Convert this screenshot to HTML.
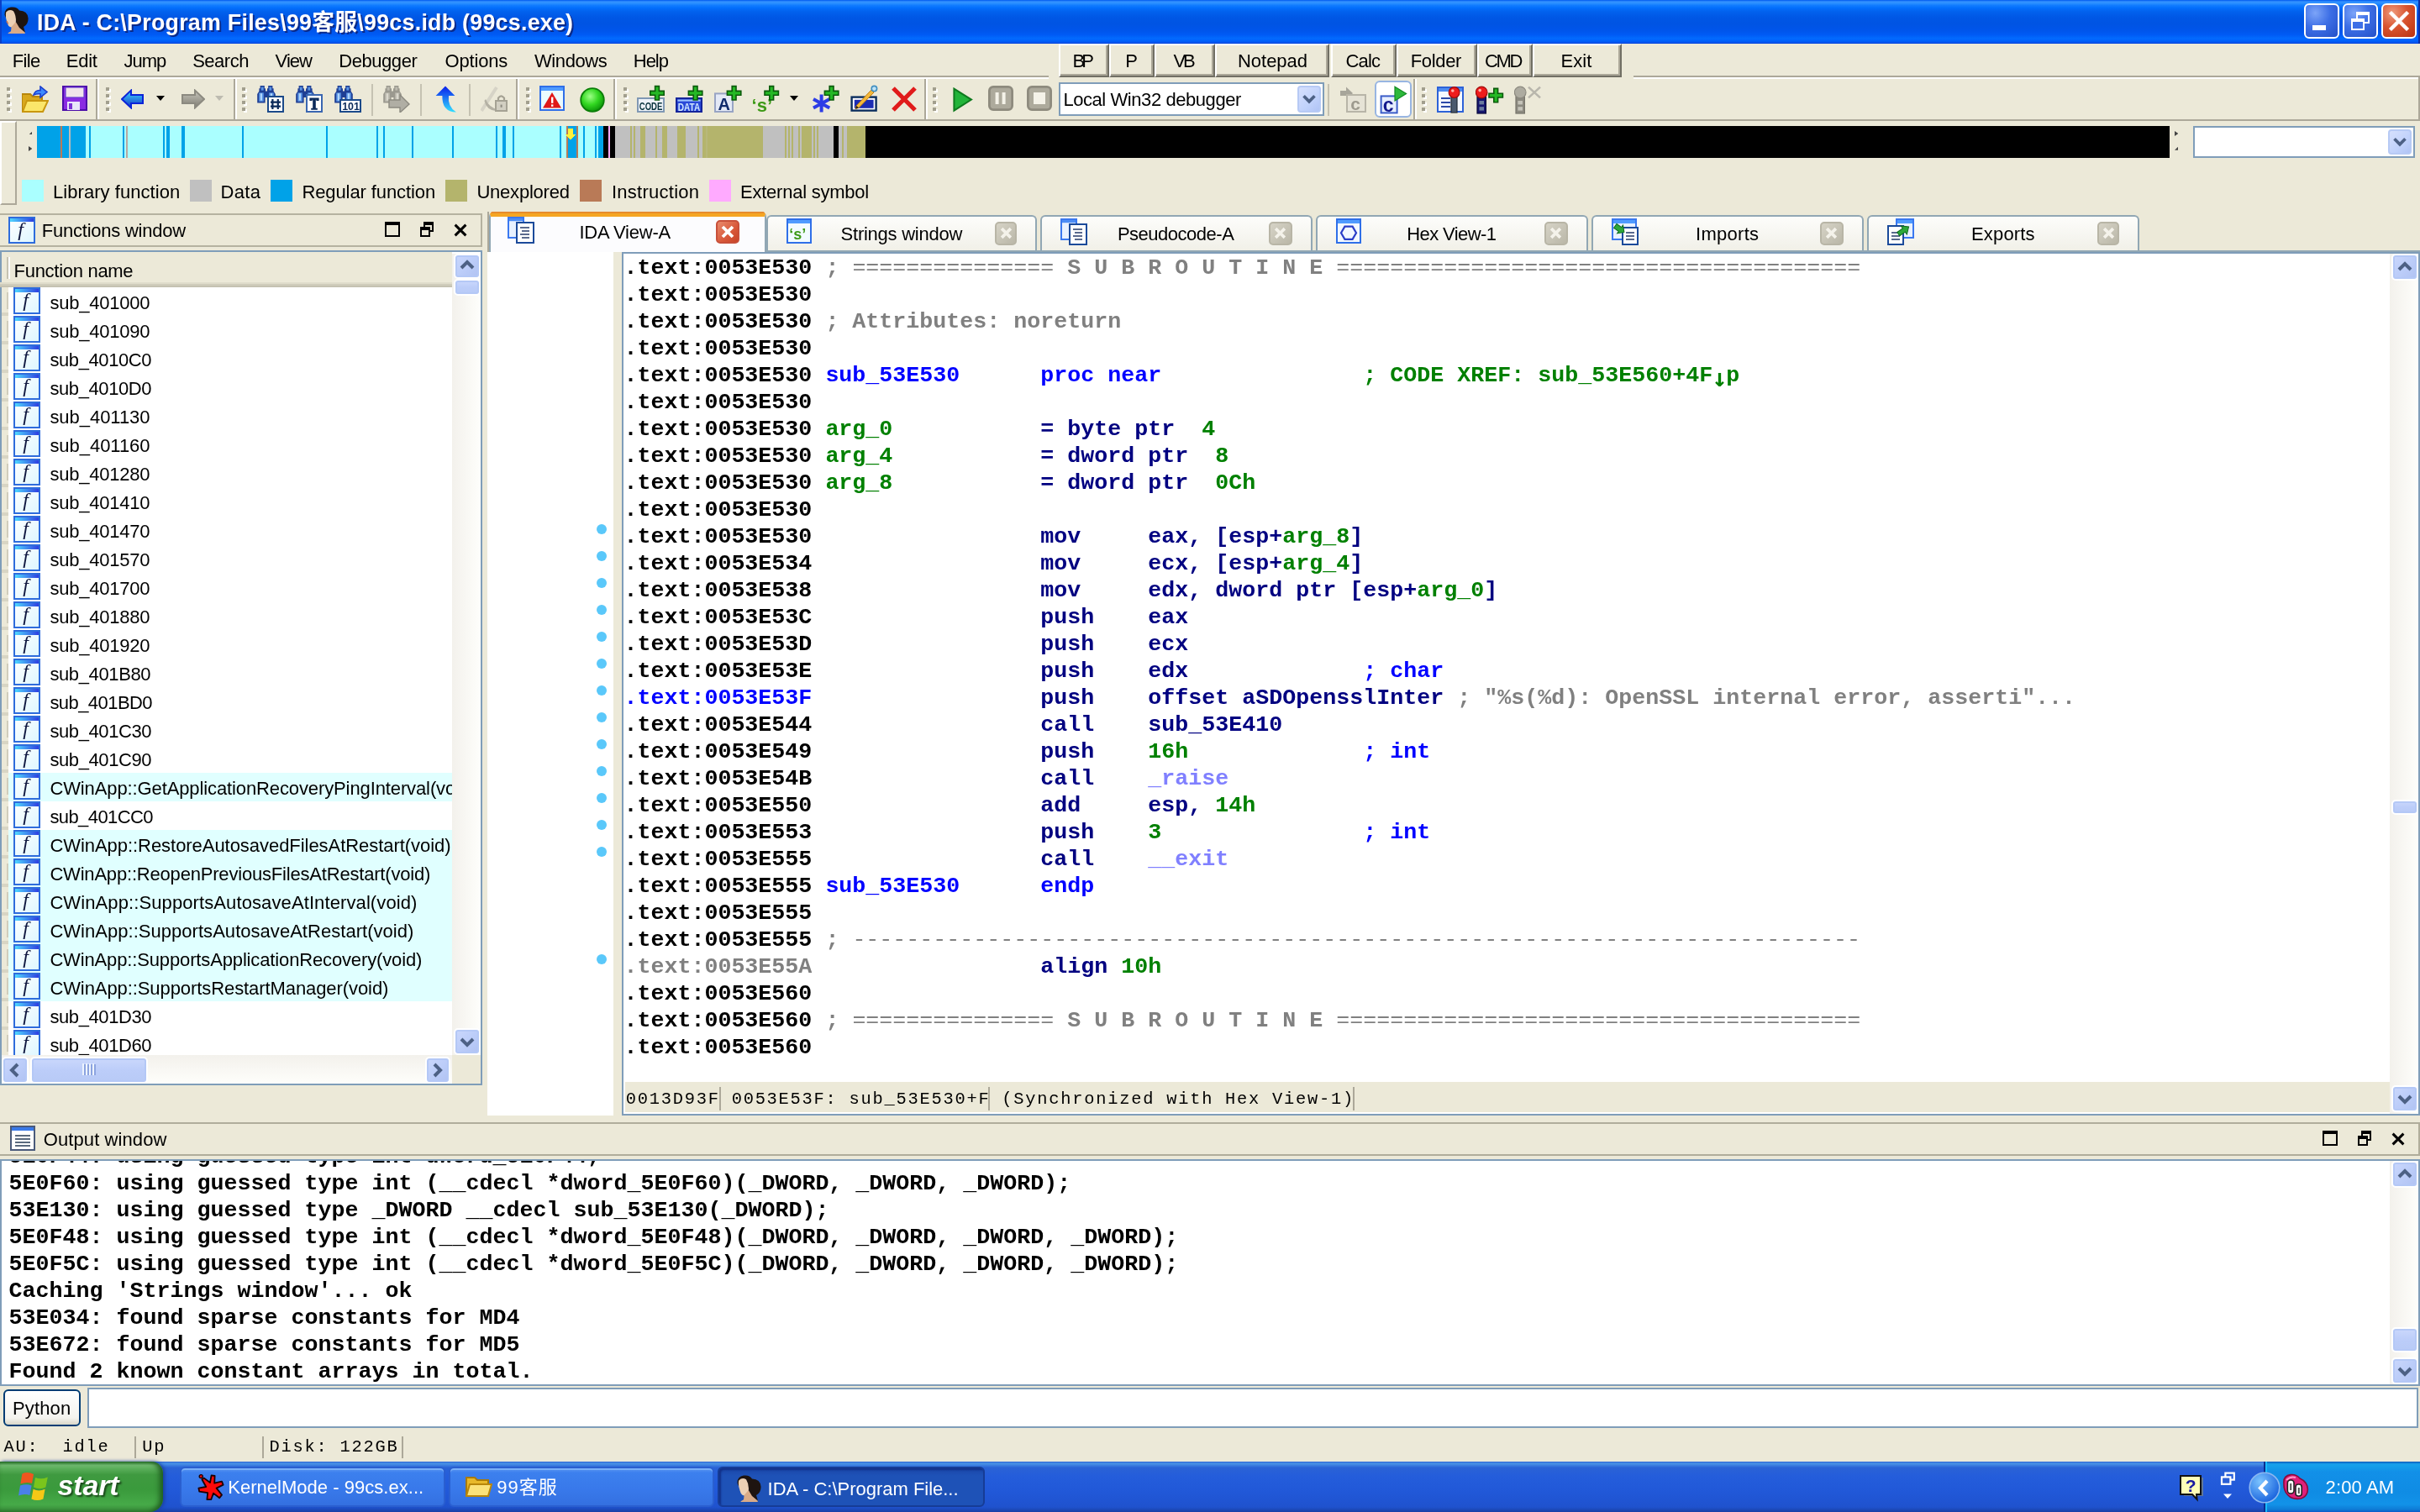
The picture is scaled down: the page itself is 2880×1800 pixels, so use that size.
<!DOCTYPE html><html><head><meta charset="utf-8"><title>IDA</title><style>
*{box-sizing:border-box;margin:0;padding:0}
html,body{width:2880px;height:1800px;overflow:hidden;background:#ECE9D8}
#r{position:absolute;left:0;top:0;width:1440px;height:900px;transform:scale(2);transform-origin:0 0;will-change:transform;background:#ECE9D8;overflow:hidden;font:11px "Liberation Sans","Noto Sans CJK SC",sans-serif;color:#000}
#r div,#r span,#r svg{position:absolute}
#r span.t{white-space:pre;line-height:13px}
.mono{font:bold 13.333px "Liberation Mono",monospace;white-space:pre;line-height:16px;height:16px}
.mono span{position:static !important}
.cm{font:10.2px "Liberation Mono",monospace;white-space:pre;line-height:13px;letter-spacing:0.88px}
</style></head><body><div id="r"><svg style="left:0;top:0" width="0" height="0"><defs><linearGradient id="fg" x1="0" y1="0" x2="1" y2="1"><stop offset="0" stop-color="#FFFFFF"/><stop offset="1" stop-color="#DDF6FF"/></linearGradient><linearGradient id="fb" x1="0" y1="0" x2="1" y2="0"><stop offset="0" stop-color="#4FD8FF"/><stop offset="1" stop-color="#2F3FE0"/></linearGradient></defs></svg>
<div style="left:0px;top:0px;width:1440px;height:26px;background:linear-gradient(180deg,#0058EE 0%,#3593FF 4%,#288EFF 8%,#127DFF 12%,#036FFC 18%,#0262EE 26%,#0057E5 40%,#0054E3 55%,#0055EB 70%,#005BF5 80%,#026AFE 88%,#0061FC 93%,#0057F0 97%,#003DD7 100%)"></div>
<svg style="left:2.2px;top:3.8px" width="16" height="16.5" viewBox="0 0 16 16.5"><path d="M0.8 5 Q0.5 1 4.5 0.3 Q8 -0.2 9.5 2.3 Q14.5 2.5 14.8 7 Q14.8 10.5 12 12 L13 15.5 L8 11.5 L6 3 L1.5 6.5 Z" fill="#1e1410"/><path d="M1.6 3.2 Q3.6 1.2 6 2.6 Q7.8 5.5 7.4 9.2 Q7 12 4.8 12.2 Q3 12.2 2.4 9.6 Q1 6 1.6 3.2Z" fill="#ecd0b4"/><path d="M2 8.5 Q2.5 10 3 9.8" stroke="#c8785a" stroke-width="0.8" fill="none"/><path d="M4.8 12 L7.4 9 L9.5 12.5 L12.8 15.2 L13 16.3 L2.8 16.3 L2.8 15.6 L4.5 14.6 Z" fill="#d9ab88"/></svg>
<span class="t" style="left:22px;top:4.7px;font:bold 13.4px 'Liberation Sans','Noto Sans CJK SC',sans-serif;line-height:17px;color:#fff;text-shadow:1px 1px 0 #0a2a8a;letter-spacing:0.135px">IDA - C:\Program Files\99客服\99cs.idb (99cs.exe)</span>
<div style="left:1371px;top:2px;width:21px;height:21px;border:1px solid #fff;border-radius:3px;background:radial-gradient(circle at 30% 25%,#7ca4f8 0%,#3d6fe6 45%,#2350c8 100%)"><div style="left:4px;top:12px;width:8px;height:3px;background:#fff"></div></div>
<div style="left:1394px;top:2px;width:21px;height:21px;border:1px solid #fff;border-radius:3px;background:radial-gradient(circle at 30% 25%,#7ca4f8 0%,#3d6fe6 45%,#2350c8 100%)"><div style="left:7px;top:4px;width:8px;height:7px;border:1px solid #fff;border-top-width:2px"></div><div style="left:4px;top:8px;width:8px;height:7px;border:1px solid #fff;border-top-width:2px;background:#3d6fe6"></div></div>
<div style="left:1417px;top:2px;width:21px;height:21px;border:1px solid #fff;border-radius:3px;background:radial-gradient(circle at 30% 25%,#ee9a7c 0%,#d9542f 45%,#b8320f 100%)"><svg style="left:0;top:0" width="19" height="19" viewBox="0 0 19 19"><path d="M5 5 L14 14 M14 5 L5 14" stroke="#fff" stroke-width="2.2" stroke-linecap="square"/></svg></div>
<div style="left:1439px;top:0px;width:1px;height:26px;background:#0A2FA8"></div>
<div style="left:0px;top:0px;width:1px;height:26px;background:#0A3FC8"></div>
<span class="t" style="left:7.4px;top:30.0px;letter-spacing:-0.345px;">File</span>
<span class="t" style="left:39.4px;top:30.0px;letter-spacing:-0.123px;">Edit</span>
<span class="t" style="left:73.7px;top:30.0px;letter-spacing:-0.469px;">Jump</span>
<span class="t" style="left:114.6px;top:30.0px;letter-spacing:-0.252px;">Search</span>
<span class="t" style="left:163.8px;top:30.0px;letter-spacing:-0.485px;">View</span>
<span class="t" style="left:201.6px;top:30.0px;letter-spacing:-0.218px;">Debugger</span>
<span class="t" style="left:264.8px;top:30.0px;letter-spacing:-0.087px;">Options</span>
<span class="t" style="left:318px;top:30.0px;letter-spacing:-0.204px;">Windows</span>
<span class="t" style="left:376.9px;top:30.0px;letter-spacing:-0.508px;">Help</span>
<div style="left:630px;top:26px;width:29.5px;height:19.5px;border-left:1px solid #fff;border-top:1px solid #fff;border-right:1px solid #716F64;border-bottom:1px solid #716F64;box-shadow:inset -1px -1px 0 #ACA899"></div>
<span class="t" style="left:638.3px;top:30.3px;letter-spacing:-1.988px;">BP</span>
<div style="left:660px;top:26px;width:26.5px;height:19.5px;border-left:1px solid #fff;border-top:1px solid #fff;border-right:1px solid #716F64;border-bottom:1px solid #716F64;box-shadow:inset -1px -1px 0 #ACA899"></div>
<span class="t" style="left:669.6px;top:30.3px;letter-spacing:-0.544px;">P</span>
<div style="left:687px;top:26px;width:35.5px;height:19.5px;border-left:1px solid #fff;border-top:1px solid #fff;border-right:1px solid #716F64;border-bottom:1px solid #716F64;box-shadow:inset -1px -1px 0 #ACA899"></div>
<span class="t" style="left:698.3px;top:30.3px;letter-spacing:-1.688px;">VB</span>
<div style="left:723px;top:26px;width:68px;height:19.5px;border-left:1px solid #fff;border-top:1px solid #fff;border-right:1px solid #716F64;border-bottom:1px solid #716F64;box-shadow:inset -1px -1px 0 #ACA899"></div>
<span class="t" style="left:736.5px;top:30.3px;letter-spacing:-0.016px;">Notepad</span>
<div style="left:792px;top:26px;width:38.5px;height:19.5px;border-left:1px solid #fff;border-top:1px solid #fff;border-right:1px solid #716F64;border-bottom:1px solid #716F64;box-shadow:inset -1px -1px 0 #ACA899"></div>
<span class="t" style="left:800.8px;top:30.3px;letter-spacing:-0.439px;">Calc</span>
<div style="left:831px;top:26px;width:47.5px;height:19.5px;border-left:1px solid #fff;border-top:1px solid #fff;border-right:1px solid #716F64;border-bottom:1px solid #716F64;box-shadow:inset -1px -1px 0 #ACA899"></div>
<span class="t" style="left:839.4px;top:30.3px;letter-spacing:-0.177px;">Folder</span>
<div style="left:879px;top:26px;width:32.5px;height:19.5px;border-left:1px solid #fff;border-top:1px solid #fff;border-right:1px solid #716F64;border-bottom:1px solid #716F64;box-shadow:inset -1px -1px 0 #ACA899"></div>
<span class="t" style="left:883.5px;top:30.3px;letter-spacing:-1.181px;">CMD</span>
<div style="left:912px;top:26px;width:53px;height:19.5px;border-left:1px solid #fff;border-top:1px solid #fff;border-right:1px solid #716F64;border-bottom:1px solid #716F64;box-shadow:inset -1px -1px 0 #ACA899"></div>
<span class="t" style="left:928.7px;top:30.3px;letter-spacing:0.052px;">Exit</span>
<div style="left:0px;top:45px;width:624px;height:1px;background:#ACA899"></div>
<div style="left:0px;top:46px;width:624px;height:1px;background:#fff"></div>
<div style="left:972px;top:45px;width:468px;height:1px;background:#ACA899"></div>
<div style="left:972px;top:46px;width:468px;height:1px;background:#fff"></div>
<div style="left:0px;top:71px;width:1440px;height:1px;background:#ACA899"></div>
<svg style="left:4px;top:52px" width="3" height="16" viewBox="0 0 3 16"><rect x="1" y="1" width="2" height="2" fill="#fff"/><rect x="0" y="0" width="2" height="2" fill="#A29F8E"/><rect x="1" y="5" width="2" height="2" fill="#fff"/><rect x="0" y="4" width="2" height="2" fill="#A29F8E"/><rect x="1" y="9" width="2" height="2" fill="#fff"/><rect x="0" y="8" width="2" height="2" fill="#A29F8E"/><rect x="1" y="13" width="2" height="2" fill="#fff"/><rect x="0" y="12" width="2" height="2" fill="#A29F8E"/></svg>
<svg style="left:13px;top:51px" width="16" height="16" viewBox="0 0 16 16"><path d="M0 5 H5 L6.5 6.5 H12 V15.5 H0 Z" fill="#D9A81C" stroke="#B8860B" stroke-width="1"/><path d="M3 9 H15.5 L12.5 15.5 H0.5 Z" fill="#FBE66A" stroke="#C9970F" stroke-width="1"/><path d="M7 5.5 Q8 2.5 11 2.8 V0.5 L15 3.8 L11 7 V4.9 Q9 4.7 7 5.5Z" fill="#3D8BFF" stroke="#1C3FCF" stroke-width="0.8"/></svg>
<svg style="left:37px;top:51px" width="15" height="15" viewBox="0 0 15 15"><rect x="0.5" y="0.5" width="14" height="14" fill="#8A2BE2" stroke="#4B0CA8"/><rect x="2" y="1" width="11" height="6" fill="#F1E4EA" stroke="#6A3FD0" stroke-width="0.6"/><rect x="3" y="9.5" width="7.5" height="5" fill="#E8E4FA"/><rect x="4" y="10.5" width="2" height="3.5" fill="#7B2FD6"/></svg>
<div style="left:57px;top:47px;width:1px;height:24px;background:#ACA899"></div>
<div style="left:58px;top:47px;width:1px;height:24px;background:#fff"></div>
<svg style="left:62.5px;top:52px" width="3" height="16" viewBox="0 0 3 16"><rect x="1" y="1" width="2" height="2" fill="#fff"/><rect x="0" y="0" width="2" height="2" fill="#A29F8E"/><rect x="1" y="5" width="2" height="2" fill="#fff"/><rect x="0" y="4" width="2" height="2" fill="#A29F8E"/><rect x="1" y="9" width="2" height="2" fill="#fff"/><rect x="0" y="8" width="2" height="2" fill="#A29F8E"/><rect x="1" y="13" width="2" height="2" fill="#fff"/><rect x="0" y="12" width="2" height="2" fill="#A29F8E"/></svg>
<svg style="left:72px;top:52.5px" width="14" height="12" viewBox="0 0 14 12"><defs><linearGradient id="ga" x1="0" y1="0" x2="0" y2="1"><stop offset="0" stop-color="#3FD8FF"/><stop offset="1" stop-color="#1233C8"/></linearGradient></defs><path d="M0.5 6 L6 0.8 V3.5 H13 V8.5 H6 V11.2 Z" fill="url(#ga)" stroke="#0A22D8" stroke-width="1"/></svg>
<svg style="left:93px;top:57px" width="5" height="3" viewBox="0 0 5 3"><path d="M0 0 H5 L2.5 3 Z" fill="#000"/></svg>
<svg style="left:108px;top:52.5px" width="14" height="12" viewBox="0 0 14 12"><defs><linearGradient id="gb" x1="0" y1="0" x2="0" y2="1"><stop offset="0" stop-color="#C8C6BC"/><stop offset="1" stop-color="#7E7C72"/></linearGradient></defs><path d="M13.5 6 L8 0.8 V3.5 H0.5 V8.5 H8 V11.2 Z" fill="url(#gb)" stroke="#8C8A80" stroke-width="1"/></svg>
<svg style="left:128px;top:57px" width="5" height="3" viewBox="0 0 5 3"><path d="M0 0 H5 L2.5 3 Z" fill="#BDBBB0"/></svg>
<div style="left:139px;top:47px;width:1px;height:24px;background:#ACA899"></div>
<div style="left:140px;top:47px;width:1px;height:24px;background:#fff"></div>
<svg style="left:144.3px;top:52px" width="3" height="16" viewBox="0 0 3 16"><rect x="1" y="1" width="2" height="2" fill="#fff"/><rect x="0" y="0" width="2" height="2" fill="#A29F8E"/><rect x="1" y="5" width="2" height="2" fill="#fff"/><rect x="0" y="4" width="2" height="2" fill="#A29F8E"/><rect x="1" y="9" width="2" height="2" fill="#fff"/><rect x="0" y="8" width="2" height="2" fill="#A29F8E"/><rect x="1" y="13" width="2" height="2" fill="#fff"/><rect x="0" y="12" width="2" height="2" fill="#A29F8E"/></svg>
<svg style="left:153px;top:51px" width="16" height="16" viewBox="0 0 16 16"><path d="M1.8 0 H4.4 V1.6 H5 V3.2 H6 V1.6 H6.6 V0 H9.2 V1.6 H9.8 V3.2 L10.9 5 V10.2 H6.2 V7 H4.8 V10.2 H0.1 V5 L1.2 3.2 V1.6 H1.8 Z" fill="#1F3F94"/><rect x="1.1" y="4.2" width="2.8" height="5.2" fill="#5B95E6"/><rect x="1.9" y="4.6" width="1.1" height="4.2" fill="#B0D6FA"/><rect x="7.1" y="4.2" width="2.8" height="5.2" fill="#5B95E6"/><rect x="7.9" y="4.6" width="1.1" height="4.2" fill="#B0D6FA"/><rect x="2.4" y="0.8" width="1.4" height="2" fill="#5B95E6"/><rect x="7.2" y="0.8" width="1.4" height="2" fill="#5B95E6"/><rect x="6.5" y="6.5" width="9" height="9" fill="#fff" stroke="#1B4A8A"/><path d="M9.2 8 V14 M12.4 8 V14 M8 9.8 H14 M8 12.3 H14" stroke="#0B2A5A" stroke-width="1.1"/></svg>
<svg style="left:176px;top:51px" width="16" height="16" viewBox="0 0 16 16"><path d="M1.8 0 H4.4 V1.6 H5 V3.2 H6 V1.6 H6.6 V0 H9.2 V1.6 H9.8 V3.2 L10.9 5 V10.2 H6.2 V7 H4.8 V10.2 H0.1 V5 L1.2 3.2 V1.6 H1.8 Z" fill="#1F3F94"/><rect x="1.1" y="4.2" width="2.8" height="5.2" fill="#5B95E6"/><rect x="1.9" y="4.6" width="1.1" height="4.2" fill="#B0D6FA"/><rect x="7.1" y="4.2" width="2.8" height="5.2" fill="#5B95E6"/><rect x="7.9" y="4.6" width="1.1" height="4.2" fill="#B0D6FA"/><rect x="2.4" y="0.8" width="1.4" height="2" fill="#5B95E6"/><rect x="7.2" y="0.8" width="1.4" height="2" fill="#5B95E6"/><rect x="6.5" y="5.5" width="9" height="10" fill="#fff" stroke="#3A66B0"/><path d="M8.2 7.2 H13.8 V9 H12.2 V8.4 H11.9 V13.4 H12.9 V14.4 H9.1 V13.4 H10.1 V8.4 H9.8 V9 H8.2 Z" fill="#0B2A5A"/></svg>
<svg style="left:199px;top:51px" width="16" height="16" viewBox="0 0 16 16"><path d="M1.8 0 H4.4 V1.6 H5 V3.2 H6 V1.6 H6.6 V0 H9.2 V1.6 H9.8 V3.2 L10.9 5 V10.2 H6.2 V7 H4.8 V10.2 H0.1 V5 L1.2 3.2 V1.6 H1.8 Z" fill="#1F3F94"/><rect x="1.1" y="4.2" width="2.8" height="5.2" fill="#5B95E6"/><rect x="1.9" y="4.6" width="1.1" height="4.2" fill="#B0D6FA"/><rect x="7.1" y="4.2" width="2.8" height="5.2" fill="#5B95E6"/><rect x="7.9" y="4.6" width="1.1" height="4.2" fill="#B0D6FA"/><rect x="2.4" y="0.8" width="1.4" height="2" fill="#5B95E6"/><rect x="7.2" y="0.8" width="1.4" height="2" fill="#5B95E6"/><rect x="3.5" y="8.5" width="12" height="7" fill="#fff" stroke="#1B4A8A"/><text x="4.6" y="14.3" font-family="Liberation Sans,sans-serif" font-weight="bold" font-size="6.2" fill="#0B2A5A">101</text></svg>
<div style="left:221px;top:50px;width:1px;height:19px;background:#C5C2B2"></div>
<svg style="left:228px;top:51px" width="16" height="16" viewBox="0 0 16 16"><path d="M1.8 0 H4.4 V1.6 H5 V3.2 H6 V1.6 H6.6 V0 H9.2 V1.6 H9.8 V3.2 L10.9 5 V10.2 H6.2 V7 H4.8 V10.2 H0.1 V5 L1.2 3.2 V1.6 H1.8 Z" fill="#9B998F"/><rect x="1.1" y="4.2" width="2.8" height="5.2" fill="#BDBBB0"/><rect x="1.9" y="4.6" width="1.1" height="4.2" fill="#DAD8CE"/><rect x="7.1" y="4.2" width="2.8" height="5.2" fill="#BDBBB0"/><rect x="7.9" y="4.6" width="1.1" height="4.2" fill="#DAD8CE"/><rect x="2.4" y="0.8" width="1.4" height="2" fill="#BDBBB0"/><rect x="7.2" y="0.8" width="1.4" height="2" fill="#BDBBB0"/><path d="M3.5 8.5 H10 V5.5 L15.5 11 L10 16 V13 H3.5 Z" fill="#B0AEA4" stroke="#8C8A80" stroke-width="0.7"/></svg>
<div style="left:250px;top:50px;width:1px;height:19px;background:#C5C2B2"></div>
<svg style="left:258.5px;top:51px" width="13" height="16" viewBox="0 0 13 16"><defs><linearGradient id="gu" x1="0" y1="0" x2="0" y2="1"><stop offset="0" stop-color="#0A1EEB"/><stop offset="1" stop-color="#33E0FF"/></linearGradient></defs><path d="M6 0.3 L11.7 6 H8 Q7.2 12.5 12.5 15.8 Q3.8 15.5 4.2 6 H0.3 Z" fill="url(#gu)"/></svg>
<div style="left:279px;top:50px;width:1px;height:19px;background:#C5C2B2"></div>
<svg style="left:286px;top:51px" width="16" height="16" viewBox="0 0 16 16"><path d="M0.5 15 L9.5 1" stroke="#D6D3C6" stroke-width="2"/><path d="M3 8 Q5 13 10 14 L9 15 Q3.5 14.5 2.2 9 Z" fill="#B4B1A4"/><rect x="9" y="9" width="6.5" height="6" fill="#D2CFC2" stroke="#A5A294"/><path d="M10.5 9 V7.3 Q12.2 5 14 7.3 V9" fill="none" stroke="#A5A294" stroke-width="1.1"/><rect x="11.8" y="11.3" width="1" height="1.6" fill="#8C8A80"/></svg>
<div style="left:307px;top:47px;width:1px;height:24px;background:#ACA899"></div>
<div style="left:308px;top:47px;width:1px;height:24px;background:#fff"></div>
<svg style="left:312.5px;top:52px" width="3" height="16" viewBox="0 0 3 16"><rect x="1" y="1" width="2" height="2" fill="#fff"/><rect x="0" y="0" width="2" height="2" fill="#A29F8E"/><rect x="1" y="5" width="2" height="2" fill="#fff"/><rect x="0" y="4" width="2" height="2" fill="#A29F8E"/><rect x="1" y="9" width="2" height="2" fill="#fff"/><rect x="0" y="8" width="2" height="2" fill="#A29F8E"/><rect x="1" y="13" width="2" height="2" fill="#fff"/><rect x="0" y="12" width="2" height="2" fill="#A29F8E"/></svg>
<svg style="left:321px;top:51px" width="15" height="15" viewBox="0 0 15 15"><rect x="0.5" y="0.5" width="14" height="14" fill="#EAFBFF" stroke="#2F6FE8"/><rect x="1" y="1" width="13" height="2" fill="#4F9BFF"/><path d="M7.5 4 L13 13.3 H2 Z" fill="#E01818"/><rect x="7" y="6.8" width="1.2" height="3.6" fill="#fff"/><rect x="7" y="11.2" width="1.2" height="1.2" fill="#fff"/></svg>
<svg style="left:344.5px;top:51.5px" width="15" height="15" viewBox="0 0 15 15"><defs><radialGradient id="gg" cx="0.4" cy="0.35" r="0.65"><stop offset="0" stop-color="#9CFF86"/><stop offset="0.55" stop-color="#33D822"/><stop offset="1" stop-color="#0E9A0A"/></radialGradient></defs><circle cx="7.5" cy="7.5" r="6.9" fill="url(#gg)" stroke="#0B7E08" stroke-width="0.9"/></svg>
<div style="left:365px;top:47px;width:1px;height:24px;background:#ACA899"></div>
<div style="left:366px;top:47px;width:1px;height:24px;background:#fff"></div>
<svg style="left:370.5px;top:52px" width="3" height="16" viewBox="0 0 3 16"><rect x="1" y="1" width="2" height="2" fill="#fff"/><rect x="0" y="0" width="2" height="2" fill="#A29F8E"/><rect x="1" y="5" width="2" height="2" fill="#fff"/><rect x="0" y="4" width="2" height="2" fill="#A29F8E"/><rect x="1" y="9" width="2" height="2" fill="#fff"/><rect x="0" y="8" width="2" height="2" fill="#A29F8E"/><rect x="1" y="13" width="2" height="2" fill="#fff"/><rect x="0" y="12" width="2" height="2" fill="#A29F8E"/></svg>
<svg style="left:378.5px;top:50px" width="17" height="17" viewBox="0 0 17 17"><rect x="0.5" y="8.5" width="15.5" height="8" fill="#EEF3F8" stroke="#8098B4"/><text x="1.4" y="15.6" font-family="Liberation Sans,sans-serif" font-weight="bold" font-size="6.6" fill="#08323C" textLength="13.8" lengthAdjust="spacingAndGlyphs">CODE</text><path d="M7.9 4.2 h2.9 v-2.9 h2.4 v2.9 h2.9 v2.4 h-2.9 v2.9 h-2.4 v-2.9 h-2.9 Z" fill="#25B825" stroke="#0A5A0A" stroke-width="0.8"/></svg>
<svg style="left:401.5px;top:50px" width="17" height="17" viewBox="0 0 17 17"><rect x="0.5" y="8.5" width="15" height="8" fill="#2A49D8" stroke="#14249A"/><rect x="1.2" y="9.3" width="13.6" height="1" fill="#9FC4FF"/><text x="1.4" y="15.8" font-family="Liberation Sans,sans-serif" font-weight="bold" font-size="6.6" fill="#CFE6FF" textLength="13.2" lengthAdjust="spacingAndGlyphs">DATA</text><path d="M7.7 4.2 h2.9 v-2.9 h2.4 v2.9 h2.9 v2.4 h-2.9 v2.9 h-2.4 v-2.9 h-2.9 Z" fill="#25B825" stroke="#0A5A0A" stroke-width="0.8"/></svg>
<svg style="left:424.5px;top:50px" width="17" height="17" viewBox="0 0 17 17"><rect x="0.5" y="5.7" width="10.5" height="10.8" fill="#E4E9F6" stroke="#98A4C4"/><text x="2.2" y="15.4" font-family="Liberation Sans,sans-serif" font-weight="bold" font-size="10" fill="#102A6A">A</text><path d="M7.7 4.2 h2.9 v-2.9 h2.4 v2.9 h2.9 v2.4 h-2.9 v2.9 h-2.4 v-2.9 h-2.9 Z" fill="#25B825" stroke="#0A5A0A" stroke-width="0.8"/></svg>
<svg style="left:447px;top:50px" width="18" height="17" viewBox="0 0 18 17"><text x="0.3" y="16.4" font-family="Liberation Sans,sans-serif" font-weight="bold" font-size="11" fill="#3E9A18">‘s’</text><path d="M8 4.2 h2.9 v-2.9 h2.4 v2.9 h2.9 v2.4 h-2.9 v2.9 h-2.4 v-2.9 h-2.9 Z" fill="#25B825" stroke="#0A5A0A" stroke-width="0.8"/></svg>
<svg style="left:469.8px;top:57px" width="5" height="3" viewBox="0 0 5 3"><path d="M0 0 H5 L2.5 3 Z" fill="#000"/></svg>
<svg style="left:482.5px;top:50px" width="17" height="17" viewBox="0 0 17 17"><path d="M5.8 6.3 V16.8 M1 9 L10.6 14.2 M10.6 9 L1 14.2" stroke="#2C3CE6" stroke-width="2"/><path d="M7.7 4.2 h2.9 v-2.9 h2.4 v2.9 h2.9 v2.4 h-2.9 v2.9 h-2.4 v-2.9 h-2.9 Z" fill="#25B825" stroke="#0A5A0A" stroke-width="0.8"/></svg>
<svg style="left:505.5px;top:50px" width="17" height="17" viewBox="0 0 17 17"><rect x="0.8" y="7.8" width="14.5" height="8" fill="#fff" stroke="#0B2E5E" stroke-width="1.2"/><rect x="2.4" y="9.4" width="11.4" height="5" fill="#1C2CB4"/><path d="M3.5 13 L12.5 3.5 L14 5 L5 14.2 L3 14.8 Z" fill="#F4B93A" stroke="#C07C12" stroke-width="0.5"/><circle cx="14.2" cy="2.8" r="1.6" fill="#BFE3F6" stroke="#3F8EC0" stroke-width="0.8"/><path d="M3 14.8 L3.6 12.9 L5 14.2Z" fill="#222"/></svg>
<svg style="left:529.5px;top:50.5px" width="16" height="16" viewBox="0 0 16 16"><path d="M1.5 1.5 L14.5 14.5 M14.5 1.5 L1.5 14.5" stroke="#E01B1B" stroke-width="2.6"/></svg>
<div style="left:550px;top:47px;width:1px;height:24px;background:#ACA899"></div>
<div style="left:551px;top:47px;width:1px;height:24px;background:#fff"></div>
<svg style="left:555.3px;top:52px" width="3" height="16" viewBox="0 0 3 16"><rect x="1" y="1" width="2" height="2" fill="#fff"/><rect x="0" y="0" width="2" height="2" fill="#A29F8E"/><rect x="1" y="5" width="2" height="2" fill="#fff"/><rect x="0" y="4" width="2" height="2" fill="#A29F8E"/><rect x="1" y="9" width="2" height="2" fill="#fff"/><rect x="0" y="8" width="2" height="2" fill="#A29F8E"/><rect x="1" y="13" width="2" height="2" fill="#fff"/><rect x="0" y="12" width="2" height="2" fill="#A29F8E"/></svg>
<svg style="left:566.5px;top:51.5px" width="12" height="15" viewBox="0 0 12 15"><path d="M0.7 0.8 L11 7.3 L0.7 13.8 Z" fill="#22B43A" stroke="#0E7A1E" stroke-width="1"/></svg>
<svg style="left:587.5px;top:51px" width="15" height="15" viewBox="0 0 15 15"><rect x="0.7" y="0.7" width="13.6" height="13.6" rx="2.3" fill="#ADAA9C" stroke="#8E8B7E" stroke-width="1.4"/><rect x="4.3" y="4" width="2" height="7" fill="#F4F2E8"/><rect x="8.3" y="4" width="2" height="7" fill="#F4F2E8"/></svg>
<svg style="left:610.5px;top:51px" width="15" height="15" viewBox="0 0 15 15"><rect x="0.7" y="0.7" width="13.6" height="13.6" rx="2.3" fill="#ADAA9C" stroke="#8E8B7E" stroke-width="1.4"/><rect x="4" y="4" width="7" height="7" fill="#F4F2E8"/></svg>
<div style="left:630px;top:49px;width:158px;height:20px;background:#fff;border:1px solid #7F9DB9"></div>
<span class="t" style="left:632.7px;top:52.7px;letter-spacing:-0.215px;">Local Win32 debugger</span>
<div style="left:772px;top:51px;width:14px;height:16px;border-radius:2px;border:1px solid #B7CAF5;background:linear-gradient(135deg,#D6E0FD 0%,#C1D2FB 60%,#B0C4F5 100%)"><svg style="left:0;top:0" width="12" height="14" viewBox="0 0 13 14"><path d="M3 5 L6.5 8.5 L10 5" fill="none" stroke="#4D6185" stroke-width="2"/></svg></div>
<div style="left:790px;top:50px;width:1px;height:19px;background:#C5C2B2"></div>
<svg style="left:796.5px;top:51px" width="17" height="16" viewBox="0 0 17 16"><path d="M0.5 3 H4 V0.8 L8 4.5 L4 8.2 V6 H0.5 Z" fill="#A7A59A"/><rect x="4.5" y="5.5" width="11" height="10" fill="#E6E3D6" stroke="#B8B5A8"/><text x="6.6" y="14.5" font-family="Liberation Sans,sans-serif" font-weight="bold" font-size="10.5" fill="#9D9A8E">c</text></svg>
<div style="left:817.5px;top:48px;width:22.5px;height:22px;border:1px solid #98B5E2;border-radius:3px;background:#fff"></div>
<svg style="left:820.5px;top:50.5px" width="17" height="17" viewBox="0 0 17 17"><rect x="0.8" y="6.2" width="9.5" height="10" fill="#E6EEFF" stroke="#3A5CC8"/><text x="1.9" y="15.3" font-family="Liberation Sans,sans-serif" font-weight="bold" font-size="11.5" fill="#141A8C">c</text><path d="M9 0.6 L15.8 4.8 L9 9 Z" fill="#2DB83A" stroke="#128A22" stroke-width="0.6"/></svg>
<div style="left:841px;top:47px;width:1px;height:24px;background:#ACA899"></div>
<div style="left:842px;top:47px;width:1px;height:24px;background:#fff"></div>
<svg style="left:846.2px;top:52px" width="3" height="16" viewBox="0 0 3 16"><rect x="1" y="1" width="2" height="2" fill="#fff"/><rect x="0" y="0" width="2" height="2" fill="#A29F8E"/><rect x="1" y="5" width="2" height="2" fill="#fff"/><rect x="0" y="4" width="2" height="2" fill="#A29F8E"/><rect x="1" y="9" width="2" height="2" fill="#fff"/><rect x="0" y="8" width="2" height="2" fill="#A29F8E"/><rect x="1" y="13" width="2" height="2" fill="#fff"/><rect x="0" y="12" width="2" height="2" fill="#A29F8E"/></svg>
<svg style="left:855px;top:50.5px" width="17" height="17" viewBox="0 0 17 17"><rect x="0.5" y="1" width="15" height="14.5" fill="#F5F9FF" stroke="#2D62D8"/><rect x="1" y="1.5" width="14" height="2" fill="#4F8CF0"/><path d="M2.5 7.5 H8 M2.5 10 H8 M2.5 12.5 H8" stroke="#2D4AA8" stroke-width="1"/><rect x="8.5" y="6.5" width="3.5" height="9.5" fill="#4A5A6E" stroke="#222A36" stroke-width="0.6"/><circle cx="10.3" cy="4" r="3.2" fill="#EE1C1C" stroke="#A00A0A" stroke-width="0.6"/><circle cx="9.4" cy="3" r="0.9" fill="#FFB0A8"/></svg>
<svg style="left:877.5px;top:50.5px" width="17" height="17" viewBox="0 0 17 17"><rect x="1" y="6.5" width="5.2" height="10" fill="#16166E" stroke="#0A0A3C" stroke-width="0.6"/><rect x="2.2" y="9" width="2.8" height="2.2" fill="#6A7A9E"/><rect x="2.2" y="12.6" width="2.8" height="2.2" fill="#6A7A9E"/><circle cx="3.6" cy="4" r="3.4" fill="#EE1C1C" stroke="#A00A0A" stroke-width="0.6"/><circle cx="2.6" cy="2.8" r="0.9" fill="#FFB0A8"/><path d="M8 4.6 h2.9 v-2.9 h2.4 v2.9 h2.9 v2.4 h-2.9 v2.9 h-2.4 v-2.9 h-2.9 Z" fill="#25B825" stroke="#0A5A0A" stroke-width="0.8"/></svg>
<svg style="left:900.5px;top:50.5px" width="17" height="17" viewBox="0 0 17 17"><rect x="1" y="6.5" width="5.2" height="10" fill="#8C8A80" stroke="#77756B" stroke-width="0.6"/><rect x="2.2" y="9" width="2.8" height="2.2" fill="#C4C2B8"/><rect x="2.2" y="12.6" width="2.8" height="2.2" fill="#C4C2B8"/><circle cx="3.6" cy="4" r="3.4" fill="#ADABA0" stroke="#8C8A80" stroke-width="0.6"/><path d="M8.5 0.8 L15.5 7.2 M15.5 0.8 L8.5 7.2" stroke="#B8B6AC" stroke-width="1.3"/></svg>
<div style="left:0px;top:72px;width:10px;height:50px;background:#ECE9D8;border-left:1px solid #fff;border-top:1px solid #fff;border-right:1px solid #ACA899;border-bottom:1px solid #ACA899"></div>
<svg style="left:16.8px;top:77.5px" width="2.4" height="2.4" viewBox="0 0 2.4 2.4"><path d="M2.4 0 V2.4 H0 Z" fill="#444"/></svg>
<svg style="left:17px;top:87px" width="2.2" height="3" viewBox="0 0 2.2 3"><path d="M0 0 L2.2 1.5 L0 3 Z" fill="#444"/></svg>
<svg style="left:1294px;top:78px" width="2.2" height="3" viewBox="0 0 2.2 3"><path d="M0 0 L2.2 1.5 L0 3 Z" fill="#444"/></svg>
<svg style="left:1294px;top:87.3px" width="2.4" height="2.4" viewBox="0 0 2.4 2.4"><path d="M2.4 0 V2.4 H0 Z" fill="#444"/></svg>
<svg style="left:22px;top:75px" width="1269" height="19" viewBox="0 0 1269 19" shape-rendering="crispEdges"><rect x="0" y="0" width="14" height="19" fill="#00A2E8"/><rect x="14" y="0" width="1" height="19" fill="#B97A57"/><rect x="15" y="0" width="4" height="19" fill="#00A2E8"/><rect x="19" y="0" width="1" height="19" fill="#C0BAB4"/><rect x="20" y="0" width="9" height="19" fill="#00A2E8"/><rect x="29" y="0" width="2" height="19" fill="#AAFFFF"/><rect x="31" y="0" width="1" height="19" fill="#00A2E8"/><rect x="32" y="0" width="19" height="19" fill="#AAFFFF"/><rect x="51" y="0" width="1" height="19" fill="#00A2E8"/><rect x="52" y="0" width="1" height="19" fill="#AAFFFF"/><rect x="53" y="0" width="1" height="19" fill="#B8A8A0"/><rect x="54" y="0" width="21" height="19" fill="#AAFFFF"/><rect x="75" y="0" width="1" height="19" fill="#00A2E8"/><rect x="76" y="0" width="1" height="19" fill="#AAFFFF"/><rect x="77" y="0" width="2" height="19" fill="#00A2E8"/><rect x="79" y="0" width="7" height="19" fill="#AAFFFF"/><rect x="86" y="0" width="2" height="19" fill="#00A2E8"/><rect x="88" y="0" width="34" height="19" fill="#AAFFFF"/><rect x="122" y="0" width="1" height="19" fill="#00A2E8"/><rect x="123" y="0" width="49" height="19" fill="#AAFFFF"/><rect x="172" y="0" width="1" height="19" fill="#00A2E8"/><rect x="173" y="0" width="29" height="19" fill="#AAFFFF"/><rect x="202" y="0" width="1" height="19" fill="#00A2E8"/><rect x="203" y="0" width="3" height="19" fill="#AAFFFF"/><rect x="206" y="0" width="1" height="19" fill="#00A2E8"/><rect x="207" y="0" width="16" height="19" fill="#AAFFFF"/><rect x="223" y="0" width="1" height="19" fill="#00A2E8"/><rect x="224" y="0" width="23" height="19" fill="#AAFFFF"/><rect x="247" y="0" width="1" height="19" fill="#00A2E8"/><rect x="248" y="0" width="25" height="19" fill="#AAFFFF"/><rect x="273" y="0" width="1" height="19" fill="#00A2E8"/><rect x="274" y="0" width="3" height="19" fill="#AAFFFF"/><rect x="277" y="0" width="2" height="19" fill="#00A2E8"/><rect x="279" y="0" width="4" height="19" fill="#AAFFFF"/><rect x="283" y="0" width="1" height="19" fill="#00A2E8"/><rect x="284" y="0" width="27" height="19" fill="#AAFFFF"/><rect x="311" y="0" width="1" height="19" fill="#00A2E8"/><rect x="312" y="0" width="3" height="19" fill="#AAFFFF"/><rect x="315" y="0" width="1" height="19" fill="#B97A57"/><rect x="316" y="0" width="5" height="19" fill="#00A2E8"/><rect x="321" y="0" width="1" height="19" fill="#B97A57"/><rect x="322" y="0" width="3" height="19" fill="#AAFFFF"/><rect x="325" y="0" width="1" height="19" fill="#00A2E8"/><rect x="326" y="0" width="6" height="19" fill="#AAFFFF"/><rect x="332" y="0" width="1" height="19" fill="#00A2E8"/><rect x="333" y="0" width="1" height="19" fill="#AAFFFF"/><rect x="334" y="0" width="3" height="19" fill="#00A2E8"/><rect x="337" y="0" width="3" height="19" fill="#000"/><rect x="340" y="0" width="1" height="19" fill="#FFAAFF"/><rect x="341" y="0" width="3" height="19" fill="#000"/><rect x="344" y="0" width="9" height="19" fill="#C0C0C0"/><rect x="353" y="0" width="1" height="19" fill="#B4B46C"/><rect x="354" y="0" width="1" height="19" fill="#C0C0C0"/><rect x="355" y="0" width="1" height="19" fill="#B4B46C"/><rect x="356" y="0" width="3" height="19" fill="#C0C0C0"/><rect x="359" y="0" width="3" height="19" fill="#B4B46C"/><rect x="362" y="0" width="6" height="19" fill="#C0C0C0"/><rect x="368" y="0" width="1" height="19" fill="#B4B46C"/><rect x="369" y="0" width="3" height="19" fill="#C0C0C0"/><rect x="372" y="0" width="3" height="19" fill="#B4B46C"/><rect x="375" y="0" width="6" height="19" fill="#C0C0C0"/><rect x="381" y="0" width="5" height="19" fill="#B4B46C"/><rect x="386" y="0" width="7" height="19" fill="#C0C0C0"/><rect x="393" y="0" width="1" height="19" fill="#B4B46C"/><rect x="394" y="0" width="2" height="19" fill="#C0C0C0"/><rect x="396" y="0" width="2" height="19" fill="#B4B46C"/><rect x="398" y="0" width="1" height="19" fill="#B8B87A"/><rect x="399" y="0" width="33" height="19" fill="#B4B46C"/><rect x="432" y="0" width="13" height="19" fill="#C0C0C0"/><rect x="445" y="0" width="1" height="19" fill="#B4B46C"/><rect x="446" y="0" width="1" height="19" fill="#C0C0C0"/><rect x="447" y="0" width="1" height="19" fill="#B4B46C"/><rect x="448" y="0" width="1" height="19" fill="#C0C0C0"/><rect x="449" y="0" width="1" height="19" fill="#B4B46C"/><rect x="450" y="0" width="3" height="19" fill="#C0C0C0"/><rect x="453" y="0" width="1" height="19" fill="#B4B46C"/><rect x="454" y="0" width="1" height="19" fill="#C0C0C0"/><rect x="455" y="0" width="6" height="19" fill="#B4B46C"/><rect x="461" y="0" width="1" height="19" fill="#C0C0C0"/><rect x="462" y="0" width="1" height="19" fill="#B4B46C"/><rect x="463" y="0" width="1" height="19" fill="#C0C0C0"/><rect x="464" y="0" width="1" height="19" fill="#B4B46C"/><rect x="465" y="0" width="9" height="19" fill="#C0C0C0"/><rect x="474" y="0" width="3" height="19" fill="#000"/><rect x="477" y="0" width="2" height="19" fill="#C0C0C0"/><rect x="479" y="0" width="1" height="19" fill="#B4B46C"/><rect x="480" y="0" width="2" height="19" fill="#C0C0C0"/><rect x="482" y="0" width="11" height="19" fill="#B4B46C"/><rect x="493" y="0" width="776" height="19" fill="#000"/><path d="M316 1.5 h3 v3.5 h1.5 l-3 3.2 l-3 -3.2 h1.5 Z" fill="#FFF23A"/></svg>
<div style="left:1305px;top:75px;width:132px;height:19px;background:#fff;border:1px solid #7F9DB9"></div>
<div style="left:1439px;top:46px;width:1px;height:26px;background:#ACA899"></div>
<div style="left:1421px;top:77px;width:14px;height:15px;border-radius:2px;border:1px solid #B7CAF5;background:linear-gradient(135deg,#D6E0FD 0%,#C1D2FB 60%,#B0C4F5 100%)"><svg style="left:0;top:0" width="12" height="13" viewBox="0 0 13 14"><path d="M3 5 L6.5 8.5 L10 5" fill="none" stroke="#4D6185" stroke-width="2"/></svg></div>
<div style="left:13px;top:107px;width:13px;height:13px;background:#AAFFFF"></div>
<span class="t" style="left:31.5px;top:108.3px;letter-spacing:0.025px;">Library function</span>
<div style="left:113px;top:107px;width:13px;height:13px;background:#C0C0C0"></div>
<span class="t" style="left:131.3px;top:108.3px;letter-spacing:0.150px;">Data</span>
<div style="left:161px;top:107px;width:13px;height:13px;background:#00A2E8"></div>
<span class="t" style="left:179.7px;top:108.3px;letter-spacing:-0.047px;">Regular function</span>
<div style="left:265px;top:107px;width:13px;height:13px;background:#B4B46C"></div>
<span class="t" style="left:283.7px;top:108.3px;letter-spacing:-0.107px;">Unexplored</span>
<div style="left:345px;top:107px;width:13px;height:13px;background:#B97A57"></div>
<span class="t" style="left:364px;top:108.3px;letter-spacing:0.125px;">Instruction</span>
<div style="left:422px;top:107px;width:13px;height:13px;background:#FFAAFF"></div>
<span class="t" style="left:440.5px;top:108.3px;letter-spacing:-0.119px;">External symbol</span>
<div style="left:0px;top:127px;width:287px;height:20px;border:1px solid #B5B2A0;border-left:0"></div>
<svg style="left:5px;top:129px" width="16" height="16" viewBox="0 0 16 16"><rect x="0.5" y="0.5" width="15" height="15" fill="url(#fg)" stroke="#2E6CDC"/><rect x="1" y="1" width="14" height="2" fill="url(#fb)"/><text x="5.6" y="11.6" font-family="Liberation Serif,serif" font-style="italic" font-size="12" fill="#101840">f</text></svg>
<span class="t" style="left:24.9px;top:130.9px;letter-spacing:-0.116px;">Functions window</span>
<div style="left:229px;top:132px;width:9px;height:9px;border:1px solid #000;border-top-width:2px"></div>
<div style="left:252.1px;top:132px;width:6px;height:5.5px;border:1px solid #000;border-top-width:2px"></div>
<div style="left:250px;top:135px;width:6px;height:6px;border:1px solid #000;border-top-width:2px;background:#ECE9D8"></div>
<svg style="left:270.2px;top:132.5px" width="8" height="8" viewBox="0 0 8 8"><path d="M0.8 0.8 L7.2 7.2 M7.2 0.8 L0.8 7.2" stroke="#000" stroke-width="1.5"/></svg>
<div style="left:0px;top:149px;width:287px;height:496.5px;background:#fff;border:1px solid #7F9DB9"></div>
<div style="left:1px;top:150px;width:268px;height:18px;background:#ECE9D8"></div>
<div style="left:0px;top:168px;width:269px;height:1px;background:#E0DDCC"></div>
<div style="left:0px;top:169px;width:269px;height:1px;background:#D0CDBC"></div>
<div style="left:0px;top:170px;width:269px;height:1px;background:#C5C2B2"></div>
<div style="left:3.5px;top:153px;width:1px;height:13px;background:#C5C2B2"></div>
<div style="left:4.5px;top:153px;width:1px;height:13px;background:#fff"></div>
<span class="t" style="left:8.3px;top:155.2px;letter-spacing:-0.147px;">Function name</span>
<div style="left:0;top:171px;width:269px;height:457px;overflow:hidden">
<div style="left:1px;top:0px;width:4px;height:17px;background:#ECE9D8"></div>
<div style="left:1px;top:14.5px;width:4px;height:2.5px;background:#D8D5C4"></div>
<div style="left:4px;top:3px;width:1px;height:10px;background:#D0CDBC"></div>
<svg style="left:8px;top:0px" width="16" height="16" viewBox="0 0 16 16"><rect x="0.5" y="0.5" width="15" height="15" fill="url(#fg)" stroke="#2E6CDC"/><rect x="1" y="1" width="14" height="2" fill="url(#fb)"/><text x="5.6" y="11.6" font-family="Liberation Serif,serif" font-style="italic" font-size="12" fill="#101840">f</text></svg>
<span class="t" style="left:29.7px;top:2.9px;letter-spacing:-0.107px;">sub_401000</span>
<div style="left:1px;top:17px;width:4px;height:17px;background:#ECE9D8"></div>
<div style="left:1px;top:31.5px;width:4px;height:2.5px;background:#D8D5C4"></div>
<div style="left:4px;top:20px;width:1px;height:10px;background:#D0CDBC"></div>
<svg style="left:8px;top:17px" width="16" height="16" viewBox="0 0 16 16"><rect x="0.5" y="0.5" width="15" height="15" fill="url(#fg)" stroke="#2E6CDC"/><rect x="1" y="1" width="14" height="2" fill="url(#fb)"/><text x="5.6" y="11.6" font-family="Liberation Serif,serif" font-style="italic" font-size="12" fill="#101840">f</text></svg>
<span class="t" style="left:29.7px;top:19.9px;letter-spacing:-0.107px;">sub_401090</span>
<div style="left:1px;top:34px;width:4px;height:17px;background:#ECE9D8"></div>
<div style="left:1px;top:48.5px;width:4px;height:2.5px;background:#D8D5C4"></div>
<div style="left:4px;top:37px;width:1px;height:10px;background:#D0CDBC"></div>
<svg style="left:8px;top:34px" width="16" height="16" viewBox="0 0 16 16"><rect x="0.5" y="0.5" width="15" height="15" fill="url(#fg)" stroke="#2E6CDC"/><rect x="1" y="1" width="14" height="2" fill="url(#fb)"/><text x="5.6" y="11.6" font-family="Liberation Serif,serif" font-style="italic" font-size="12" fill="#101840">f</text></svg>
<span class="t" style="left:29.7px;top:36.9px;letter-spacing:-0.199px;">sub_4010C0</span>
<div style="left:1px;top:51px;width:4px;height:17px;background:#ECE9D8"></div>
<div style="left:1px;top:65.5px;width:4px;height:2.5px;background:#D8D5C4"></div>
<div style="left:4px;top:54px;width:1px;height:10px;background:#D0CDBC"></div>
<svg style="left:8px;top:51px" width="16" height="16" viewBox="0 0 16 16"><rect x="0.5" y="0.5" width="15" height="15" fill="url(#fg)" stroke="#2E6CDC"/><rect x="1" y="1" width="14" height="2" fill="url(#fb)"/><text x="5.6" y="11.6" font-family="Liberation Serif,serif" font-style="italic" font-size="12" fill="#101840">f</text></svg>
<span class="t" style="left:29.7px;top:53.9px;letter-spacing:-0.199px;">sub_4010D0</span>
<div style="left:1px;top:68px;width:4px;height:17px;background:#ECE9D8"></div>
<div style="left:1px;top:82.5px;width:4px;height:2.5px;background:#D8D5C4"></div>
<div style="left:4px;top:71px;width:1px;height:10px;background:#D0CDBC"></div>
<svg style="left:8px;top:68px" width="16" height="16" viewBox="0 0 16 16"><rect x="0.5" y="0.5" width="15" height="15" fill="url(#fg)" stroke="#2E6CDC"/><rect x="1" y="1" width="14" height="2" fill="url(#fb)"/><text x="5.6" y="11.6" font-family="Liberation Serif,serif" font-style="italic" font-size="12" fill="#101840">f</text></svg>
<span class="t" style="left:29.7px;top:70.9px;letter-spacing:-0.017px;">sub_401130</span>
<div style="left:1px;top:85px;width:4px;height:17px;background:#ECE9D8"></div>
<div style="left:1px;top:99.5px;width:4px;height:2.5px;background:#D8D5C4"></div>
<div style="left:4px;top:88px;width:1px;height:10px;background:#D0CDBC"></div>
<svg style="left:8px;top:85px" width="16" height="16" viewBox="0 0 16 16"><rect x="0.5" y="0.5" width="15" height="15" fill="url(#fg)" stroke="#2E6CDC"/><rect x="1" y="1" width="14" height="2" fill="url(#fb)"/><text x="5.6" y="11.6" font-family="Liberation Serif,serif" font-style="italic" font-size="12" fill="#101840">f</text></svg>
<span class="t" style="left:29.7px;top:87.9px;letter-spacing:-0.017px;">sub_401160</span>
<div style="left:1px;top:102px;width:4px;height:17px;background:#ECE9D8"></div>
<div style="left:1px;top:116.5px;width:4px;height:2.5px;background:#D8D5C4"></div>
<div style="left:4px;top:105px;width:1px;height:10px;background:#D0CDBC"></div>
<svg style="left:8px;top:102px" width="16" height="16" viewBox="0 0 16 16"><rect x="0.5" y="0.5" width="15" height="15" fill="url(#fg)" stroke="#2E6CDC"/><rect x="1" y="1" width="14" height="2" fill="url(#fb)"/><text x="5.6" y="11.6" font-family="Liberation Serif,serif" font-style="italic" font-size="12" fill="#101840">f</text></svg>
<span class="t" style="left:29.7px;top:104.9px;letter-spacing:-0.107px;">sub_401280</span>
<div style="left:1px;top:119px;width:4px;height:17px;background:#ECE9D8"></div>
<div style="left:1px;top:133.5px;width:4px;height:2.5px;background:#D8D5C4"></div>
<div style="left:4px;top:122px;width:1px;height:10px;background:#D0CDBC"></div>
<svg style="left:8px;top:119px" width="16" height="16" viewBox="0 0 16 16"><rect x="0.5" y="0.5" width="15" height="15" fill="url(#fg)" stroke="#2E6CDC"/><rect x="1" y="1" width="14" height="2" fill="url(#fb)"/><text x="5.6" y="11.6" font-family="Liberation Serif,serif" font-style="italic" font-size="12" fill="#101840">f</text></svg>
<span class="t" style="left:29.7px;top:121.9px;letter-spacing:-0.107px;">sub_401410</span>
<div style="left:1px;top:136px;width:4px;height:17px;background:#ECE9D8"></div>
<div style="left:1px;top:150.5px;width:4px;height:2.5px;background:#D8D5C4"></div>
<div style="left:4px;top:139px;width:1px;height:10px;background:#D0CDBC"></div>
<svg style="left:8px;top:136px" width="16" height="16" viewBox="0 0 16 16"><rect x="0.5" y="0.5" width="15" height="15" fill="url(#fg)" stroke="#2E6CDC"/><rect x="1" y="1" width="14" height="2" fill="url(#fb)"/><text x="5.6" y="11.6" font-family="Liberation Serif,serif" font-style="italic" font-size="12" fill="#101840">f</text></svg>
<span class="t" style="left:29.7px;top:138.9px;letter-spacing:-0.107px;">sub_401470</span>
<div style="left:1px;top:153px;width:4px;height:17px;background:#ECE9D8"></div>
<div style="left:1px;top:167.5px;width:4px;height:2.5px;background:#D8D5C4"></div>
<div style="left:4px;top:156px;width:1px;height:10px;background:#D0CDBC"></div>
<svg style="left:8px;top:153px" width="16" height="16" viewBox="0 0 16 16"><rect x="0.5" y="0.5" width="15" height="15" fill="url(#fg)" stroke="#2E6CDC"/><rect x="1" y="1" width="14" height="2" fill="url(#fb)"/><text x="5.6" y="11.6" font-family="Liberation Serif,serif" font-style="italic" font-size="12" fill="#101840">f</text></svg>
<span class="t" style="left:29.7px;top:155.9px;letter-spacing:-0.107px;">sub_401570</span>
<div style="left:1px;top:170px;width:4px;height:17px;background:#ECE9D8"></div>
<div style="left:1px;top:184.5px;width:4px;height:2.5px;background:#D8D5C4"></div>
<div style="left:4px;top:173px;width:1px;height:10px;background:#D0CDBC"></div>
<svg style="left:8px;top:170px" width="16" height="16" viewBox="0 0 16 16"><rect x="0.5" y="0.5" width="15" height="15" fill="url(#fg)" stroke="#2E6CDC"/><rect x="1" y="1" width="14" height="2" fill="url(#fb)"/><text x="5.6" y="11.6" font-family="Liberation Serif,serif" font-style="italic" font-size="12" fill="#101840">f</text></svg>
<span class="t" style="left:29.7px;top:172.9px;letter-spacing:-0.107px;">sub_401700</span>
<div style="left:1px;top:187px;width:4px;height:17px;background:#ECE9D8"></div>
<div style="left:1px;top:201.5px;width:4px;height:2.5px;background:#D8D5C4"></div>
<div style="left:4px;top:190px;width:1px;height:10px;background:#D0CDBC"></div>
<svg style="left:8px;top:187px" width="16" height="16" viewBox="0 0 16 16"><rect x="0.5" y="0.5" width="15" height="15" fill="url(#fg)" stroke="#2E6CDC"/><rect x="1" y="1" width="14" height="2" fill="url(#fb)"/><text x="5.6" y="11.6" font-family="Liberation Serif,serif" font-style="italic" font-size="12" fill="#101840">f</text></svg>
<span class="t" style="left:29.7px;top:189.9px;letter-spacing:-0.107px;">sub_401880</span>
<div style="left:1px;top:204px;width:4px;height:17px;background:#ECE9D8"></div>
<div style="left:1px;top:218.5px;width:4px;height:2.5px;background:#D8D5C4"></div>
<div style="left:4px;top:207px;width:1px;height:10px;background:#D0CDBC"></div>
<svg style="left:8px;top:204px" width="16" height="16" viewBox="0 0 16 16"><rect x="0.5" y="0.5" width="15" height="15" fill="url(#fg)" stroke="#2E6CDC"/><rect x="1" y="1" width="14" height="2" fill="url(#fb)"/><text x="5.6" y="11.6" font-family="Liberation Serif,serif" font-style="italic" font-size="12" fill="#101840">f</text></svg>
<span class="t" style="left:29.7px;top:206.9px;letter-spacing:-0.107px;">sub_401920</span>
<div style="left:1px;top:221px;width:4px;height:17px;background:#ECE9D8"></div>
<div style="left:1px;top:235.5px;width:4px;height:2.5px;background:#D8D5C4"></div>
<div style="left:4px;top:224px;width:1px;height:10px;background:#D0CDBC"></div>
<svg style="left:8px;top:221px" width="16" height="16" viewBox="0 0 16 16"><rect x="0.5" y="0.5" width="15" height="15" fill="url(#fg)" stroke="#2E6CDC"/><rect x="1" y="1" width="14" height="2" fill="url(#fb)"/><text x="5.6" y="11.6" font-family="Liberation Serif,serif" font-style="italic" font-size="12" fill="#101840">f</text></svg>
<span class="t" style="left:29.7px;top:223.9px;letter-spacing:-0.187px;">sub_401B80</span>
<div style="left:1px;top:238px;width:4px;height:17px;background:#ECE9D8"></div>
<div style="left:1px;top:252.5px;width:4px;height:2.5px;background:#D8D5C4"></div>
<div style="left:4px;top:241px;width:1px;height:10px;background:#D0CDBC"></div>
<svg style="left:8px;top:238px" width="16" height="16" viewBox="0 0 16 16"><rect x="0.5" y="0.5" width="15" height="15" fill="url(#fg)" stroke="#2E6CDC"/><rect x="1" y="1" width="14" height="2" fill="url(#fb)"/><text x="5.6" y="11.6" font-family="Liberation Serif,serif" font-style="italic" font-size="12" fill="#101840">f</text></svg>
<span class="t" style="left:29.7px;top:240.9px;letter-spacing:-0.279px;">sub_401BD0</span>
<div style="left:1px;top:255px;width:4px;height:17px;background:#ECE9D8"></div>
<div style="left:1px;top:269.5px;width:4px;height:2.5px;background:#D8D5C4"></div>
<div style="left:4px;top:258px;width:1px;height:10px;background:#D0CDBC"></div>
<svg style="left:8px;top:255px" width="16" height="16" viewBox="0 0 16 16"><rect x="0.5" y="0.5" width="15" height="15" fill="url(#fg)" stroke="#2E6CDC"/><rect x="1" y="1" width="14" height="2" fill="url(#fb)"/><text x="5.6" y="11.6" font-family="Liberation Serif,serif" font-style="italic" font-size="12" fill="#101840">f</text></svg>
<span class="t" style="left:29.7px;top:257.9px;letter-spacing:-0.199px;">sub_401C30</span>
<div style="left:1px;top:272px;width:4px;height:17px;background:#ECE9D8"></div>
<div style="left:1px;top:286.5px;width:4px;height:2.5px;background:#D8D5C4"></div>
<div style="left:4px;top:275px;width:1px;height:10px;background:#D0CDBC"></div>
<svg style="left:8px;top:272px" width="16" height="16" viewBox="0 0 16 16"><rect x="0.5" y="0.5" width="15" height="15" fill="url(#fg)" stroke="#2E6CDC"/><rect x="1" y="1" width="14" height="2" fill="url(#fb)"/><text x="5.6" y="11.6" font-family="Liberation Serif,serif" font-style="italic" font-size="12" fill="#101840">f</text></svg>
<span class="t" style="left:29.7px;top:274.9px;letter-spacing:-0.199px;">sub_401C90</span>
<div style="left:5px;top:289px;width:264px;height:17px;background:#E0FFFF"></div>
<div style="left:1px;top:289px;width:4px;height:17px;background:#ECE9D8"></div>
<div style="left:1px;top:303.5px;width:4px;height:2.5px;background:#D8D5C4"></div>
<div style="left:4px;top:292px;width:1px;height:10px;background:#D0CDBC"></div>
<svg style="left:8px;top:289px" width="16" height="16" viewBox="0 0 16 16"><rect x="0.5" y="0.5" width="15" height="15" fill="url(#fg)" stroke="#2E6CDC"/><rect x="1" y="1" width="14" height="2" fill="url(#fb)"/><text x="5.6" y="11.6" font-family="Liberation Serif,serif" font-style="italic" font-size="12" fill="#101840">f</text></svg>
<span class="t" style="left:29.7px;top:291.9px;letter-spacing:-0.056px;">CWinApp::GetApplicationRecoveryPingInterval(void)</span>
<div style="left:1px;top:306px;width:4px;height:17px;background:#ECE9D8"></div>
<div style="left:1px;top:320.5px;width:4px;height:2.5px;background:#D8D5C4"></div>
<div style="left:4px;top:309px;width:1px;height:10px;background:#D0CDBC"></div>
<svg style="left:8px;top:306px" width="16" height="16" viewBox="0 0 16 16"><rect x="0.5" y="0.5" width="15" height="15" fill="url(#fg)" stroke="#2E6CDC"/><rect x="1" y="1" width="14" height="2" fill="url(#fb)"/><text x="5.6" y="11.6" font-family="Liberation Serif,serif" font-style="italic" font-size="12" fill="#101840">f</text></svg>
<span class="t" style="left:29.7px;top:308.9px;letter-spacing:-0.291px;">sub_401CC0</span>
<div style="left:5px;top:323px;width:264px;height:17px;background:#E0FFFF"></div>
<div style="left:1px;top:323px;width:4px;height:17px;background:#ECE9D8"></div>
<div style="left:1px;top:337.5px;width:4px;height:2.5px;background:#D8D5C4"></div>
<div style="left:4px;top:326px;width:1px;height:10px;background:#D0CDBC"></div>
<svg style="left:8px;top:323px" width="16" height="16" viewBox="0 0 16 16"><rect x="0.5" y="0.5" width="15" height="15" fill="url(#fg)" stroke="#2E6CDC"/><rect x="1" y="1" width="14" height="2" fill="url(#fb)"/><text x="5.6" y="11.6" font-family="Liberation Serif,serif" font-style="italic" font-size="12" fill="#101840">f</text></svg>
<span class="t" style="left:29.7px;top:325.9px;letter-spacing:-0.024px;">CWinApp::RestoreAutosavedFilesAtRestart(void)</span>
<div style="left:5px;top:340px;width:264px;height:17px;background:#E0FFFF"></div>
<div style="left:1px;top:340px;width:4px;height:17px;background:#ECE9D8"></div>
<div style="left:1px;top:354.5px;width:4px;height:2.5px;background:#D8D5C4"></div>
<div style="left:4px;top:343px;width:1px;height:10px;background:#D0CDBC"></div>
<svg style="left:8px;top:340px" width="16" height="16" viewBox="0 0 16 16"><rect x="0.5" y="0.5" width="15" height="15" fill="url(#fg)" stroke="#2E6CDC"/><rect x="1" y="1" width="14" height="2" fill="url(#fb)"/><text x="5.6" y="11.6" font-family="Liberation Serif,serif" font-style="italic" font-size="12" fill="#101840">f</text></svg>
<span class="t" style="left:29.7px;top:342.9px;letter-spacing:-0.095px;">CWinApp::ReopenPreviousFilesAtRestart(void)</span>
<div style="left:5px;top:357px;width:264px;height:17px;background:#E0FFFF"></div>
<div style="left:1px;top:357px;width:4px;height:17px;background:#ECE9D8"></div>
<div style="left:1px;top:371.5px;width:4px;height:2.5px;background:#D8D5C4"></div>
<div style="left:4px;top:360px;width:1px;height:10px;background:#D0CDBC"></div>
<svg style="left:8px;top:357px" width="16" height="16" viewBox="0 0 16 16"><rect x="0.5" y="0.5" width="15" height="15" fill="url(#fg)" stroke="#2E6CDC"/><rect x="1" y="1" width="14" height="2" fill="url(#fb)"/><text x="5.6" y="11.6" font-family="Liberation Serif,serif" font-style="italic" font-size="12" fill="#101840">f</text></svg>
<span class="t" style="left:29.7px;top:359.9px;letter-spacing:0.052px;">CWinApp::SupportsAutosaveAtInterval(void)</span>
<div style="left:5px;top:374px;width:264px;height:17px;background:#E0FFFF"></div>
<div style="left:1px;top:374px;width:4px;height:17px;background:#ECE9D8"></div>
<div style="left:1px;top:388.5px;width:4px;height:2.5px;background:#D8D5C4"></div>
<div style="left:4px;top:377px;width:1px;height:10px;background:#D0CDBC"></div>
<svg style="left:8px;top:374px" width="16" height="16" viewBox="0 0 16 16"><rect x="0.5" y="0.5" width="15" height="15" fill="url(#fg)" stroke="#2E6CDC"/><rect x="1" y="1" width="14" height="2" fill="url(#fb)"/><text x="5.6" y="11.6" font-family="Liberation Serif,serif" font-style="italic" font-size="12" fill="#101840">f</text></svg>
<span class="t" style="left:29.7px;top:376.9px;letter-spacing:0.017px;">CWinApp::SupportsAutosaveAtRestart(void)</span>
<div style="left:5px;top:391px;width:264px;height:17px;background:#E0FFFF"></div>
<div style="left:1px;top:391px;width:4px;height:17px;background:#ECE9D8"></div>
<div style="left:1px;top:405.5px;width:4px;height:2.5px;background:#D8D5C4"></div>
<div style="left:4px;top:394px;width:1px;height:10px;background:#D0CDBC"></div>
<svg style="left:8px;top:391px" width="16" height="16" viewBox="0 0 16 16"><rect x="0.5" y="0.5" width="15" height="15" fill="url(#fg)" stroke="#2E6CDC"/><rect x="1" y="1" width="14" height="2" fill="url(#fb)"/><text x="5.6" y="11.6" font-family="Liberation Serif,serif" font-style="italic" font-size="12" fill="#101840">f</text></svg>
<span class="t" style="left:29.7px;top:393.9px;letter-spacing:-0.071px;">CWinApp::SupportsApplicationRecovery(void)</span>
<div style="left:5px;top:408px;width:264px;height:17px;background:#E0FFFF"></div>
<div style="left:1px;top:408px;width:4px;height:17px;background:#ECE9D8"></div>
<div style="left:1px;top:422.5px;width:4px;height:2.5px;background:#D8D5C4"></div>
<div style="left:4px;top:411px;width:1px;height:10px;background:#D0CDBC"></div>
<svg style="left:8px;top:408px" width="16" height="16" viewBox="0 0 16 16"><rect x="0.5" y="0.5" width="15" height="15" fill="url(#fg)" stroke="#2E6CDC"/><rect x="1" y="1" width="14" height="2" fill="url(#fb)"/><text x="5.6" y="11.6" font-family="Liberation Serif,serif" font-style="italic" font-size="12" fill="#101840">f</text></svg>
<span class="t" style="left:29.7px;top:410.9px;letter-spacing:-0.041px;">CWinApp::SupportsRestartManager(void)</span>
<div style="left:1px;top:425px;width:4px;height:17px;background:#ECE9D8"></div>
<div style="left:1px;top:439.5px;width:4px;height:2.5px;background:#D8D5C4"></div>
<div style="left:4px;top:428px;width:1px;height:10px;background:#D0CDBC"></div>
<svg style="left:8px;top:425px" width="16" height="16" viewBox="0 0 16 16"><rect x="0.5" y="0.5" width="15" height="15" fill="url(#fg)" stroke="#2E6CDC"/><rect x="1" y="1" width="14" height="2" fill="url(#fb)"/><text x="5.6" y="11.6" font-family="Liberation Serif,serif" font-style="italic" font-size="12" fill="#101840">f</text></svg>
<span class="t" style="left:29.7px;top:427.9px;letter-spacing:-0.199px;">sub_401D30</span>
<div style="left:1px;top:442px;width:4px;height:17px;background:#ECE9D8"></div>
<div style="left:1px;top:456.5px;width:4px;height:2.5px;background:#D8D5C4"></div>
<div style="left:4px;top:445px;width:1px;height:10px;background:#D0CDBC"></div>
<svg style="left:8px;top:442px" width="16" height="16" viewBox="0 0 16 16"><rect x="0.5" y="0.5" width="15" height="15" fill="url(#fg)" stroke="#2E6CDC"/><rect x="1" y="1" width="14" height="2" fill="url(#fb)"/><text x="5.6" y="11.6" font-family="Liberation Serif,serif" font-style="italic" font-size="12" fill="#101840">f</text></svg>
<span class="t" style="left:29.7px;top:444.9px;letter-spacing:-0.199px;">sub_401D60</span>
</div>
<div style="left:269px;top:150.5px;width:17px;height:478px;background:linear-gradient(90deg,#F3F1EC,#FEFEFB)"></div>
<div style="left:269.5px;top:150.5px;width:16.5px;height:15.5px;border:1px solid #fff;border-radius:2.5px;background:linear-gradient(135deg,#CBD8FC,#BCCDF9 50%,#B0C2F2);box-shadow:inset 0 0 0 1px #B4C8F6"><svg style="left:0.25px;top:-0.25px" width="14" height="14" viewBox="0 0 14 14"><path d="M3.5 8.5 L7 5 L10.5 8.5" fill="none" stroke="#4D6185" stroke-width="2"/></svg></div>
<div style="left:269.5px;top:166px;width:16.5px;height:9.5px;border:1px solid #fff;border-radius:2.5px;background:linear-gradient(180deg,#CBD8FC,#BCCDF9 50%,#B8CAF6);box-shadow:inset 0 0 0 1px #B4C8F6"></div>
<div style="left:269.5px;top:611.5px;width:16.5px;height:16px;border:1px solid #fff;border-radius:2.5px;background:linear-gradient(135deg,#CBD8FC,#BCCDF9 50%,#B0C2F2);box-shadow:inset 0 0 0 1px #B4C8F6"><svg style="left:0.25px;top:0.0px" width="14" height="14" viewBox="0 0 14 14"><path d="M3.5 5.5 L7 9 L10.5 5.5" fill="none" stroke="#4D6185" stroke-width="2"/></svg></div>
<div style="left:1px;top:628px;width:268px;height:16.5px;background:linear-gradient(180deg,#F3F1EC,#FEFEFB)"></div>
<div style="left:269px;top:628px;width:17px;height:16.5px;background:#ECE9D8"></div>
<div style="left:1px;top:628.5px;width:15.5px;height:16px;border:1px solid #fff;border-radius:2.5px;background:linear-gradient(135deg,#CBD8FC,#BCCDF9 50%,#B0C2F2);box-shadow:inset 0 0 0 1px #B4C8F6"><svg style="left:-0.25px;top:0.0px" width="14" height="14" viewBox="0 0 14 14"><path d="M8.5 3.5 L5 7 L8.5 10.5" fill="none" stroke="#4D6185" stroke-width="2"/></svg></div>
<div style="left:18px;top:628.5px;width:69.5px;height:16px;border:1px solid #fff;border-radius:2.5px;background:linear-gradient(180deg,#CBD8FC,#BCCDF9 50%,#B8CAF6);box-shadow:inset 0 0 0 1px #B4C8F6"></div>
<div style="left:252.5px;top:628.5px;width:15.5px;height:16px;border:1px solid #fff;border-radius:2.5px;background:linear-gradient(135deg,#CBD8FC,#BCCDF9 50%,#B0C2F2);box-shadow:inset 0 0 0 1px #B4C8F6"><svg style="left:-0.25px;top:0.0px" width="14" height="14" viewBox="0 0 14 14"><path d="M5.5 3.5 L9 7 L5.5 10.5" fill="none" stroke="#4D6185" stroke-width="2"/></svg></div>
<svg style="left:48.5px;top:633px" width="8" height="7" viewBox="0 0 8 7"><path d="M0.5 0 V7 M2.5 0 V7 M4.5 0 V7 M6.5 0 V7" stroke="#EEF4FE" stroke-width="1"/><path d="M1.5 0.5 V7 M3.5 0.5 V7 M5.5 0.5 V7 M7.5 0.5 V7" stroke="#8CA4E0" stroke-width="1"/></svg>
<div style="left:290px;top:149px;width:1150px;height:1px;background:#91A7B4"></div>
<div style="left:290.5px;top:126px;width:165px;height:24px;background:#FCFCFE;border:1px solid #91A7B4;border-bottom:0;border-top:3px solid #F5A623;border-radius:3px 3px 0 0"></div>
<div style="left:291.5px;top:126px;width:163px;height:1px;background:#E68B2C;border-radius:3px 3px 0 0"></div>
<svg style="left:302px;top:129px" width="16" height="16" viewBox="0 0 16 16"><rect x="0.5" y="0.5" width="9" height="12" fill="#E8F1FF" stroke="#3A78F0"/><rect x="1" y="1" width="8" height="1.6" fill="#4D8EF5"/><rect x="5.5" y="3.5" width="10" height="12" fill="#fff" stroke="#1B4A9A"/><path d="M7.5 6.5 H13 M8.5 8.5 H13 M7.5 10.5 H13 M8.5 12.5 H13" stroke="#5A6A8E" stroke-width="1"/></svg>
<span class="t" style="left:344.7px;top:132.1px;letter-spacing:-0.115px;">IDA View-A</span>
<div style="left:426.2px;top:131px;width:14px;height:14px;border-radius:2.5px;border:1px solid #C8503A;background:linear-gradient(135deg,#E88A6C,#D8583A 60%,#C84428)"><svg style="left:0;top:0" width="12" height="12" viewBox="0 0 12 12"><path d="M3 3 L9 9 M9 3 L3 9" stroke="#fff" stroke-width="1.9"/></svg></div>
<div style="left:456px;top:128.3px;width:161.4px;height:20.7px;background:linear-gradient(180deg,#FDFDFB,#F1F0E8);border:1px solid #91A7B4;border-bottom:0;border-radius:3px 3px 0 0"></div>
<svg style="left:467.7px;top:130px" width="15" height="15" viewBox="0 0 15 15"><rect x="0.5" y="0.5" width="14" height="14" fill="#F2FBFF" stroke="#2F6FE8"/><rect x="1" y="1" width="13" height="2" fill="#4F9BFF"/><text x="1.6" y="12.6" font-family="Liberation Sans,sans-serif" font-weight="bold" font-size="9" fill="#3E9A18">‘s’</text></svg>
<span class="t" style="left:500.3px;top:132.8px;letter-spacing:-0.122px;">Strings window</span>
<div style="left:591.9px;top:132.3px;width:13.5px;height:13.5px;border-radius:2.5px;border:1px solid #B8B5A6;background:linear-gradient(135deg,#D6D3C6,#C5C2B4 60%,#BAB7A8)"><svg style="left:0;top:0" width="11.5" height="11.5" viewBox="0 0 12 12"><path d="M3.2 3.2 L8.8 8.8 M8.8 3.2 L3.2 8.8" stroke="#F4F2EA" stroke-width="1.9"/></svg></div>
<div style="left:619.2px;top:128.3px;width:162.2px;height:20.7px;background:linear-gradient(180deg,#FDFDFB,#F1F0E8);border:1px solid #91A7B4;border-bottom:0;border-radius:3px 3px 0 0"></div>
<svg style="left:630.9000000000001px;top:130px" width="16" height="16" viewBox="0 0 16 16"><rect x="0.5" y="0.5" width="9" height="12" fill="#E8F1FF" stroke="#3A78F0"/><rect x="1" y="1" width="8" height="1.6" fill="#4D8EF5"/><rect x="5.5" y="3.5" width="10" height="12" fill="#fff" stroke="#1B4A9A"/><path d="M7.5 6.5 H13 M8.5 8.5 H13 M7.5 10.5 H13 M8.5 12.5 H13" stroke="#5A6A8E" stroke-width="1"/></svg>
<span class="t" style="left:664.95px;top:132.8px;letter-spacing:-0.243px;">Pseudocode-A</span>
<div style="left:755.1px;top:132.3px;width:13.5px;height:13.5px;border-radius:2.5px;border:1px solid #B8B5A6;background:linear-gradient(135deg,#D6D3C6,#C5C2B4 60%,#BAB7A8)"><svg style="left:0;top:0" width="11.5" height="11.5" viewBox="0 0 12 12"><path d="M3.2 3.2 L8.8 8.8 M8.8 3.2 L3.2 8.8" stroke="#F4F2EA" stroke-width="1.9"/></svg></div>
<div style="left:783.3px;top:128.3px;width:162.2px;height:20.7px;background:linear-gradient(180deg,#FDFDFB,#F1F0E8);border:1px solid #91A7B4;border-bottom:0;border-radius:3px 3px 0 0"></div>
<svg style="left:795.0px;top:130px" width="15" height="15" viewBox="0 0 15 15"><rect x="0.5" y="0.5" width="14" height="14" fill="#F2F8FF" stroke="#2F6FE8"/><rect x="1" y="1" width="13" height="2" fill="#4F9BFF"/><path d="M5.2 4.8 H9.8 L12 8.6 L9.8 12.4 H5.2 L3 8.6 Z" fill="none" stroke="#2A3EC8" stroke-width="1.1"/></svg>
<span class="t" style="left:837.0999999999999px;top:132.8px;letter-spacing:-0.294px;">Hex View-1</span>
<div style="left:919.1999999999999px;top:132.3px;width:13.5px;height:13.5px;border-radius:2.5px;border:1px solid #B8B5A6;background:linear-gradient(135deg,#D6D3C6,#C5C2B4 60%,#BAB7A8)"><svg style="left:0;top:0" width="11.5" height="11.5" viewBox="0 0 12 12"><path d="M3.2 3.2 L8.8 8.8 M8.8 3.2 L3.2 8.8" stroke="#F4F2EA" stroke-width="1.9"/></svg></div>
<div style="left:947.3px;top:128.3px;width:162.2px;height:20.7px;background:linear-gradient(180deg,#FDFDFB,#F1F0E8);border:1px solid #91A7B4;border-bottom:0;border-radius:3px 3px 0 0"></div>
<svg style="left:959.0px;top:130px" width="16" height="16" viewBox="0 0 16 16"><rect x="0.5" y="0.5" width="14" height="12" fill="#E8F1FF" stroke="#3A78F0"/><rect x="1" y="1" width="13" height="2" fill="#4F9BFF"/><rect x="6.5" y="5.5" width="9" height="10" fill="#fff" stroke="#1B4A9A"/><path d="M8.5 8.5 H13.5 M8.5 10.5 H13.5 M8.5 12.5 H13.5" stroke="#5A6A8E" stroke-width="1"/><path d="M1.5 5 L5 5 L5 3.5 L8 6.5 L5 9.5 L5 8 L1.5 8 Z" fill="#2DA83A" stroke="#0E6A1E" stroke-width="0.5" transform="rotate(35 5 6.5)"/></svg>
<span class="t" style="left:1009.05px;top:132.8px;letter-spacing:0.135px;">Imports</span>
<div style="left:1083.2px;top:132.3px;width:13.5px;height:13.5px;border-radius:2.5px;border:1px solid #B8B5A6;background:linear-gradient(135deg,#D6D3C6,#C5C2B4 60%,#BAB7A8)"><svg style="left:0;top:0" width="11.5" height="11.5" viewBox="0 0 12 12"><path d="M3.2 3.2 L8.8 8.8 M8.8 3.2 L3.2 8.8" stroke="#F4F2EA" stroke-width="1.9"/></svg></div>
<div style="left:1111.4px;top:128.3px;width:161.4px;height:20.7px;background:linear-gradient(180deg,#FDFDFB,#F1F0E8);border:1px solid #91A7B4;border-bottom:0;border-radius:3px 3px 0 0"></div>
<svg style="left:1123.1000000000001px;top:130px" width="16" height="16" viewBox="0 0 16 16"><rect x="5.5" y="0.5" width="10" height="11" fill="#E8F1FF" stroke="#3A78F0"/><rect x="6" y="1" width="9" height="2" fill="#4F9BFF"/><rect x="0.5" y="4.5" width="9" height="11" fill="#fff" stroke="#1B4A9A"/><path d="M2.5 8.5 H7.5 M2.5 10.5 H7.5 M2.5 12.5 H7.5" stroke="#5A6A8E" stroke-width="1"/><path d="M6 6 L10 6 L10 4.2 L13.5 7.3 L10 10.4 L10 8.6 L6 8.6 Z" fill="#2DA83A" stroke="#0E6A1E" stroke-width="0.5" transform="rotate(-35 9.5 7.3)"/></svg>
<span class="t" style="left:1173.0px;top:132.8px;letter-spacing:0.084px;">Exports</span>
<div style="left:1247.9px;top:132.3px;width:13.5px;height:13.5px;border-radius:2.5px;border:1px solid #B8B5A6;background:linear-gradient(135deg,#D6D3C6,#C5C2B4 60%,#BAB7A8)"><svg style="left:0;top:0" width="11.5" height="11.5" viewBox="0 0 12 12"><path d="M3.2 3.2 L8.8 8.8 M8.8 3.2 L3.2 8.8" stroke="#F4F2EA" stroke-width="1.9"/></svg></div>
<div style="left:290px;top:150px;width:75px;height:514px;background:#fff"></div>
<div style="left:290px;top:126px;width:1px;height:24px;background:#ACA899"></div>
<div style="left:370px;top:150px;width:1070px;height:514px;background:#fff;border:1px solid #7F9DB9"></div>
<div style="left:371.5px;top:151px;width:1050.5px;height:493px;overflow:hidden">
<div class="mono" style="left:-0.3px;top:0.5px"><span style="color:#000">.text:0053E530</span> <span style="color:#808080">; </span><span style="color:#808080;font-weight:normal">===============</span><span style="color:#808080"> S U B R O U T I N E </span><span style="color:#808080;font-weight:normal">=======================================</span></div>
<div class="mono" style="left:-0.3px;top:16.5px"><span style="color:#000">.text:0053E530</span></div>
<div class="mono" style="left:-0.3px;top:32.5px"><span style="color:#000">.text:0053E530</span> <span style="color:#808080">; Attributes: noreturn</span></div>
<div class="mono" style="left:-0.3px;top:48.5px"><span style="color:#000">.text:0053E530</span></div>
<div class="mono" style="left:-0.3px;top:64.5px"><span style="color:#000">.text:0053E530</span> <span style="color:#0000FF">sub_53E530      proc near</span>               <span style="color:#008000">; CODE XREF: sub_53E560+4F</span><span style="color:#008000;display:inline-block;width:8px;height:16px;vertical-align:top;text-align:center;font:bold 15px/19px DejaVu Sans Mono,Liberation Mono,monospace;text-indent:-0.5px">↓</span><span style="color:#008000">p</span></div>
<div class="mono" style="left:-0.3px;top:80.5px"><span style="color:#000">.text:0053E530</span></div>
<div class="mono" style="left:-0.3px;top:96.5px"><span style="color:#000">.text:0053E530</span> <span style="color:#008000">arg_0           </span><span style="color:#000080">= byte ptr </span><span style="color:#008000"> 4</span></div>
<div class="mono" style="left:-0.3px;top:112.5px"><span style="color:#000">.text:0053E530</span> <span style="color:#008000">arg_4           </span><span style="color:#000080">= dword ptr </span><span style="color:#008000"> 8</span></div>
<div class="mono" style="left:-0.3px;top:128.5px"><span style="color:#000">.text:0053E530</span> <span style="color:#008000">arg_8           </span><span style="color:#000080">= dword ptr </span><span style="color:#008000"> 0Ch</span></div>
<div class="mono" style="left:-0.3px;top:144.5px"><span style="color:#000">.text:0053E530</span></div>
<div class="mono" style="left:-0.3px;top:160.5px"><span style="color:#000">.text:0053E530</span>                 <span style="color:#000080">mov     </span><span style="color:#000080">eax, [esp+</span><span style="color:#008000">arg_8</span><span style="color:#000080">]</span></div>
<div class="mono" style="left:-0.3px;top:176.5px"><span style="color:#000">.text:0053E534</span>                 <span style="color:#000080">mov     </span><span style="color:#000080">ecx, [esp+</span><span style="color:#008000">arg_4</span><span style="color:#000080">]</span></div>
<div class="mono" style="left:-0.3px;top:192.5px"><span style="color:#000">.text:0053E538</span>                 <span style="color:#000080">mov     </span><span style="color:#000080">edx, dword ptr [esp+</span><span style="color:#008000">arg_0</span><span style="color:#000080">]</span></div>
<div class="mono" style="left:-0.3px;top:208.5px"><span style="color:#000">.text:0053E53C</span>                 <span style="color:#000080">push    </span><span style="color:#000080">eax</span></div>
<div class="mono" style="left:-0.3px;top:224.5px"><span style="color:#000">.text:0053E53D</span>                 <span style="color:#000080">push    </span><span style="color:#000080">ecx</span></div>
<div class="mono" style="left:-0.3px;top:240.5px"><span style="color:#000">.text:0053E53E</span>                 <span style="color:#000080">push    </span><span style="color:#000080">edx             </span><span style="color:#0000FF">; char</span></div>
<div class="mono" style="left:-0.3px;top:256.5px"><span style="color:#0000FF">.text:0053E53F</span>                 <span style="color:#000080">push    </span><span style="color:#000080">offset aSDOpensslInter</span> <span style="color:#808080">; &quot;%s(%d): OpenSSL internal error, asserti&quot;...</span></div>
<div class="mono" style="left:-0.3px;top:272.5px"><span style="color:#000">.text:0053E544</span>                 <span style="color:#000080">call    </span><span style="color:#000080">sub_53E410</span></div>
<div class="mono" style="left:-0.3px;top:288.5px"><span style="color:#000">.text:0053E549</span>                 <span style="color:#000080">push    </span><span style="color:#008000">16h             </span><span style="color:#0000FF">; int</span></div>
<div class="mono" style="left:-0.3px;top:304.5px"><span style="color:#000">.text:0053E54B</span>                 <span style="color:#000080">call    </span><span style="color:#8080FF">_raise</span></div>
<div class="mono" style="left:-0.3px;top:320.5px"><span style="color:#000">.text:0053E550</span>                 <span style="color:#000080">add     </span><span style="color:#000080">esp, </span><span style="color:#008000">14h</span></div>
<div class="mono" style="left:-0.3px;top:336.5px"><span style="color:#000">.text:0053E553</span>                 <span style="color:#000080">push    </span><span style="color:#008000">3               </span><span style="color:#0000FF">; int</span></div>
<div class="mono" style="left:-0.3px;top:352.5px"><span style="color:#000">.text:0053E555</span>                 <span style="color:#000080">call    </span><span style="color:#8080FF">__exit</span></div>
<div class="mono" style="left:-0.3px;top:368.5px"><span style="color:#000">.text:0053E555</span> <span style="color:#0000FF">sub_53E530      endp</span></div>
<div class="mono" style="left:-0.3px;top:384.5px"><span style="color:#000">.text:0053E555</span></div>
<div class="mono" style="left:-0.3px;top:400.5px"><span style="color:#000">.text:0053E555</span> <span style="color:#808080">; </span><span style="color:#808080;font-weight:normal">---------------------------------------------------------------------------</span></div>
<div class="mono" style="left:-0.3px;top:416.5px"><span style="color:#808080">.text:0053E55A</span>                 <span style="color:#000080">align </span><span style="color:#008000">10h</span></div>
<div class="mono" style="left:-0.3px;top:432.5px"><span style="color:#000">.text:0053E560</span></div>
<div class="mono" style="left:-0.3px;top:448.5px"><span style="color:#000">.text:0053E560</span> <span style="color:#808080">; </span><span style="color:#808080;font-weight:normal">===============</span><span style="color:#808080"> S U B R O U T I N E </span><span style="color:#808080;font-weight:normal">=======================================</span></div>
<div class="mono" style="left:-0.3px;top:464.5px"><span style="color:#000">.text:0053E560</span></div>
</div>
<div style="left:355px;top:311.5px;width:6px;height:6px;background:#5AC8FA;border-radius:3px"></div>
<div style="left:355px;top:327.5px;width:6px;height:6px;background:#5AC8FA;border-radius:3px"></div>
<div style="left:355px;top:343.5px;width:6px;height:6px;background:#5AC8FA;border-radius:3px"></div>
<div style="left:355px;top:359.5px;width:6px;height:6px;background:#5AC8FA;border-radius:3px"></div>
<div style="left:355px;top:375.5px;width:6px;height:6px;background:#5AC8FA;border-radius:3px"></div>
<div style="left:355px;top:391.5px;width:6px;height:6px;background:#5AC8FA;border-radius:3px"></div>
<div style="left:355px;top:407.5px;width:6px;height:6px;background:#5AC8FA;border-radius:3px"></div>
<div style="left:355px;top:423.5px;width:6px;height:6px;background:#5AC8FA;border-radius:3px"></div>
<div style="left:355px;top:439.5px;width:6px;height:6px;background:#5AC8FA;border-radius:3px"></div>
<div style="left:355px;top:455.5px;width:6px;height:6px;background:#5AC8FA;border-radius:3px"></div>
<div style="left:355px;top:471.5px;width:6px;height:6px;background:#5AC8FA;border-radius:3px"></div>
<div style="left:355px;top:487.5px;width:6px;height:6px;background:#5AC8FA;border-radius:3px"></div>
<div style="left:355px;top:503.5px;width:6px;height:6px;background:#5AC8FA;border-radius:3px"></div>
<div style="left:355px;top:567.5px;width:6px;height:6px;background:#5AC8FA;border-radius:3px"></div>
<div style="left:372px;top:644px;width:1050px;height:18px;background:#ECE9D8"></div>
<span class="cm" style="left:372.4px;top:647.5px">0013D93F 0053E53F: sub_53E530+F (Synchronized with Hex View-1)</span>
<div style="left:428.2px;top:646.5px;width:1px;height:14px;background:#ACA899"></div>
<div style="left:588.2px;top:646.5px;width:1px;height:14px;background:#ACA899"></div>
<div style="left:804.5px;top:646.5px;width:1px;height:14px;background:#ACA899"></div>
<div style="left:1422px;top:151px;width:17px;height:511.5px;background:linear-gradient(90deg,#F3F1EC,#FEFEFB)"></div>
<div style="left:1423px;top:151px;width:15.5px;height:16px;border:1px solid #fff;border-radius:2.5px;background:linear-gradient(135deg,#CBD8FC,#BCCDF9 50%,#B0C2F2);box-shadow:inset 0 0 0 1px #B4C8F6"><svg style="left:-0.25px;top:0.0px" width="14" height="14" viewBox="0 0 14 14"><path d="M3.5 8.5 L7 5 L10.5 8.5" fill="none" stroke="#4D6185" stroke-width="2"/></svg></div>
<div style="left:1423px;top:476px;width:15.5px;height:9px;border:1px solid #fff;border-radius:2.5px;background:linear-gradient(180deg,#CBD8FC,#BCCDF9 50%,#B8CAF6);box-shadow:inset 0 0 0 1px #B4C8F6"></div>
<div style="left:1423px;top:646px;width:15.5px;height:16px;border:1px solid #fff;border-radius:2.5px;background:linear-gradient(135deg,#CBD8FC,#BCCDF9 50%,#B0C2F2);box-shadow:inset 0 0 0 1px #B4C8F6"><svg style="left:-0.25px;top:0.0px" width="14" height="14" viewBox="0 0 14 14"><path d="M3.5 5.5 L7 9 L10.5 5.5" fill="none" stroke="#4D6185" stroke-width="2"/></svg></div>
<div style="left:0px;top:668px;width:1440px;height:20px;border-top:1px solid #B0AD9B;border-bottom:1px solid #B0AD9B;border-right:1px solid #B0AD9B"></div>
<svg style="left:6px;top:670px" width="15" height="15" viewBox="0 0 15 15"><rect x="0.5" y="0.5" width="14" height="14" fill="#fff" stroke="#4A5A7A"/><rect x="1" y="1" width="13" height="2" fill="#3A7AE8"/><path d="M3 6 H12 M3 8 H12 M3 10 H12 M3 12 H12" stroke="#5A6A7E" stroke-width="1"/></svg>
<span class="t" style="left:25.9px;top:671.5px;letter-spacing:0.045px;">Output window</span>
<div style="left:1382px;top:673px;width:9px;height:9px;border:1px solid #000;border-top-width:2px"></div>
<div style="left:1405.0px;top:673px;width:6px;height:5.5px;border:1px solid #000;border-top-width:2px"></div>
<div style="left:1402.9px;top:676px;width:6px;height:6px;border:1px solid #000;border-top-width:2px;background:#ECE9D8"></div>
<svg style="left:1423.2px;top:673.5px" width="8" height="8" viewBox="0 0 8 8"><path d="M0.8 0.8 L7.2 7.2 M7.2 0.8 L0.8 7.2" stroke="#000" stroke-width="1.5"/></svg>
<div style="left:0px;top:690px;width:1440px;height:135px;background:#fff;border:1px solid #7F9DB9"></div>
<div style="left:1px;top:691px;width:1421px;height:133px;overflow:hidden">
<div class="mono" style="left:4.3px;top:-10.1px">5E0F44: using guessed type int dword_5E0F44;</div>
<div class="mono" style="left:4.3px;top:5.9px">5E0F60: using guessed type int (__cdecl *dword_5E0F60)(_DWORD, _DWORD, _DWORD);</div>
<div class="mono" style="left:4.3px;top:21.9px">53E130: using guessed type _DWORD __cdecl sub_53E130(_DWORD);</div>
<div class="mono" style="left:4.3px;top:37.9px">5E0F48: using guessed type int (__cdecl *dword_5E0F48)(_DWORD, _DWORD, _DWORD, _DWORD);</div>
<div class="mono" style="left:4.3px;top:53.9px">5E0F5C: using guessed type int (__cdecl *dword_5E0F5C)(_DWORD, _DWORD, _DWORD, _DWORD);</div>
<div class="mono" style="left:4.3px;top:69.9px">Caching &#x27;Strings window&#x27;... ok</div>
<div class="mono" style="left:4.3px;top:85.9px">53E034: found sparse constants for MD4</div>
<div class="mono" style="left:4.3px;top:101.9px">53E672: found sparse constants for MD5</div>
<div class="mono" style="left:4.3px;top:117.9px">Found 2 known constant arrays in total.</div>
</div>
<div style="left:1422px;top:691px;width:17px;height:133px;background:linear-gradient(90deg,#F3F1EC,#FEFEFB)"></div>
<div style="left:1423px;top:691px;width:15.5px;height:16px;border:1px solid #fff;border-radius:2.5px;background:linear-gradient(135deg,#CBD8FC,#BCCDF9 50%,#B0C2F2);box-shadow:inset 0 0 0 1px #B4C8F6"><svg style="left:-0.25px;top:0.0px" width="14" height="14" viewBox="0 0 14 14"><path d="M3.5 8.5 L7 5 L10.5 8.5" fill="none" stroke="#4D6185" stroke-width="2"/></svg></div>
<div style="left:1423px;top:790px;width:15.5px;height:15px;border:1px solid #fff;border-radius:2.5px;background:linear-gradient(180deg,#CBD8FC,#BCCDF9 50%,#B8CAF6);box-shadow:inset 0 0 0 1px #B4C8F6"></div>
<div style="left:1423px;top:808px;width:15.5px;height:16px;border:1px solid #fff;border-radius:2.5px;background:linear-gradient(135deg,#CBD8FC,#BCCDF9 50%,#B0C2F2);box-shadow:inset 0 0 0 1px #B4C8F6"><svg style="left:-0.25px;top:0.0px" width="14" height="14" viewBox="0 0 14 14"><path d="M3.5 5.5 L7 9 L10.5 5.5" fill="none" stroke="#4D6185" stroke-width="2"/></svg></div>
<div style="left:2px;top:827px;width:46px;height:22px;border:1px solid #003C74;border-radius:3px;background:linear-gradient(180deg,#fff,#F4F3EE 80%,#D9D6C8)"></div>
<span class="t" style="left:7.5px;top:832.1px;letter-spacing:0.070px;">Python</span>
<div style="left:52px;top:826px;width:1387px;height:23.5px;background:#fff;border:1px solid #7F9DB9"></div>
<span class="cm" style="left:2.3px;top:855.2px">AU:  idle</span>
<span class="cm" style="left:84.6px;top:855.2px">Up</span>
<span class="cm" style="left:160.3px;top:855.2px">Disk: 122GB</span>
<div style="left:79.5px;top:854.5px;width:1px;height:13px;background:#ACA899"></div>
<div style="left:155.5px;top:854.5px;width:1px;height:13px;background:#ACA899"></div>
<div style="left:238.5px;top:854.5px;width:1px;height:13px;background:#ACA899"></div>
<div style="left:0px;top:870px;width:1440px;height:30px;background:linear-gradient(180deg,#3168D5 0%,#4993E6 4%,#2A62D6 12%,#245DDB 30%,#2158D8 60%,#1F52CE 90%,#1941A5 100%)"></div>
<div style="left:0px;top:870px;width:96.5px;height:30px;border-radius:0 7px 8px 0;background:linear-gradient(180deg,#2F7F33 0%,#74BE74 7%,#5AAE5A 14%,#3F9A40 26%,#3A9A3C 55%,#46AA48 85%,#3A8F3C 100%);box-shadow:inset -2px 0 3px #1E5B1E, 1px 0 2px #1A3F9A"></div>
<svg style="left:10.6px;top:875.6px" width="18.5" height="18" viewBox="0 0 18.5 18"><path d="M2.2 1.2 Q5.5 -0.3 9 1.5 L8 7 Q5 5.8 1.2 7.2 Z" fill="#F0561E"/><path d="M10 3.5 Q13.5 5 17.4 3.2 L16.2 9.3 Q12.8 11 9 9.3 Z" fill="#7AC51C"/><path d="M1 8.3 Q4.5 7 7.8 8.2 L6.7 14 Q3.5 12.8 0 14.3 Z" fill="#4A80E8"/><path d="M8.8 10.4 Q12 12 15.8 10.4 L14.7 16.2 Q11.2 17.8 7.7 16.2 Z" fill="#F5C816"/></svg>
<span class="t" style="left:34.3px;top:873.8px;font:italic bold 17px 'Liberation Sans',sans-serif;line-height:22px;color:#fff;text-shadow:1px 1px 1px #1A4A1A;letter-spacing:-0.1px">start</span>
<div style="left:107px;top:873px;width:158px;height:24px;border-radius:3px;background:linear-gradient(180deg,#5A94F0 0%,#3C80EE 12%,#3878EA 60%,#3470E0 100%);border:1px solid #2A5FD0;box-shadow:inset 0 1px 0 #7AB0F8"><svg style="left:8.5px;top:3px" width="17" height="17" viewBox="0 0 17 17"><path d="M8 5.5 L8.8 1.2 L10.8 1.5 L10.6 5.8 L15 4.8 L15.8 6.8 L11.8 8.8 L15 12.8 L13.6 14.6 L10 11.8 L8.6 15.6 L6.2 15.6 L6.6 11.6 L1.6 10.8 L1.2 8.8 L5.6 8 L3.2 3.6 L4.4 2.8 Z" fill="#FF0A0A" stroke="#1a0000" stroke-width="0.9" stroke-linejoin="round"/><circle cx="2.6" cy="1.8" r="1" fill="#FF0A0A" stroke="#1a0000" stroke-width="0.7"/></svg></div>
<span class="t" style="left:135.6px;top:879.0px;letter-spacing:0.015px;color:#fff">KernelMode - 99cs.ex...</span>
<div style="left:267px;top:873px;width:158px;height:24px;border-radius:3px;background:linear-gradient(180deg,#5A94F0 0%,#3C80EE 12%,#3878EA 60%,#3470E0 100%);border:1px solid #2A5FD0;box-shadow:inset 0 1px 0 #7AB0F8"><svg style="left:9px;top:4px" width="16" height="14" viewBox="0 0 16 14"><path d="M0.5 1.5 H5.5 L7 3 H13.5 V12.5 H0.5 Z" fill="#E8B82A" stroke="#A87A0A"/><path d="M2.5 5.5 H15.5 L13.5 12.5 H0.5 Z" fill="#FBE27A" stroke="#B8860B"/></svg></div>
<span class="t" style="left:295.6px;top:879.0px;letter-spacing:0.517px;color:#fff">99客服</span>
<div style="left:427px;top:873px;width:158.5px;height:24px;border-radius:3px;background:linear-gradient(180deg,#1A46A8,#1E52B7 20%,#1E52B7);border:1px solid #163C96;box-shadow:inset 1px 1px 1px #123088"><svg style="left:9.5px;top:3.5px" width="16" height="16.5" viewBox="0 0 16 16.5"><path d="M0.8 5 Q0.5 1 4.5 0.3 Q8 -0.2 9.5 2.3 Q14.5 2.5 14.8 7 Q14.8 10.5 12 12 L13 15.5 L8 11.5 L6 3 L1.5 6.5 Z" fill="#1e1410"/><path d="M1.6 3.2 Q3.6 1.2 6 2.6 Q7.8 5.5 7.4 9.2 Q7 12 4.8 12.2 Q3 12.2 2.4 9.6 Q1 6 1.6 3.2Z" fill="#ecd0b4"/><path d="M4.8 12 L7.4 9 L9.5 12.5 L12.8 15.2 L13 16.3 L2.8 16.3 L2.8 15.6 L4.5 14.6 Z" fill="#d9ab88"/></svg></div>
<span class="t" style="left:456.8px;top:879.8px;letter-spacing:-0.009px;color:#fff">IDA - C:\Program File...</span>
<div style="left:1346.7px;top:870px;width:93.3px;height:30px;background:linear-gradient(180deg,#0C59B9 0%,#17A1EC 5%,#139EE9 10%,#1290E8 20%,#0F8CE4 60%,#1292E8 85%,#0E7BD5 95%,#095BC9 100%);border-left:1px solid #0A2F8F;box-shadow:inset 1px 0 0 #18BBFF"></div>
<span class="t" style="left:1383.8px;top:879.1px;letter-spacing:0.057px;color:#fff">2:00 AM</span>
<svg style="left:1297px;top:878px" width="15" height="15.5" viewBox="0 0 15 15.5"><path d="M1.5 1.5 H14 V12.5 H2.5 Z" fill="#8a8a6a" opacity="0.6"/><path d="M0.5 0.5 H12.5 V11.5 H10 L10.3 14.5 L7.5 11.5 H0.5 Z" fill="#FFFFB8" stroke="#111" stroke-width="1"/><text x="3.4" y="10" font-family="Liberation Sans,sans-serif" font-weight="bold" font-size="10.5" fill="#1A1AA0">?</text></svg>
<svg style="left:1321.3px;top:875.8px" width="10" height="17" viewBox="0 0 10 17"><rect x="3.2" y="0.8" width="5.2" height="4" fill="none" stroke="#fff" stroke-width="1.1"/><rect x="1" y="3.2" width="5.2" height="4.2" fill="#2A5FD6" stroke="#fff" stroke-width="1.1"/><path d="M2 13.2 H7 L4.5 16 Z" fill="#fff"/></svg>
<svg style="left:1338.2px;top:875.8px" width="19" height="19" viewBox="0 0 19 19"><defs><radialGradient id="tg" cx="0.35" cy="0.3" r="0.75"><stop offset="0" stop-color="#7CC4FF"/><stop offset="1" stop-color="#1660DC"/></radialGradient></defs><circle cx="9.5" cy="9.5" r="8.9" fill="url(#tg)" stroke="#8CB8F0" stroke-width="0.8"/><path d="M11 5.5 L7 9.7 L11 14" fill="none" stroke="#fff" stroke-width="2.1"/></svg>
<svg style="left:1358px;top:877px" width="16" height="16" viewBox="0 0 16 16"><path d="M1 6 Q0.5 1.5 5 0.8 Q8.5 0.5 10.5 3 Q15 5 15.2 9.5 Q15 14 11 15 Q6 15.8 3.5 13 Q0.8 10.5 1 6Z" fill="#E0207A" stroke="#8A0A3A" stroke-width="0.8"/><path d="M2.5 4 Q5 1.5 8 2.5" stroke="#FF9AC8" stroke-width="1" fill="none"/><rect x="3.2" y="4" width="3.8" height="8" rx="1.7" fill="#fff" stroke="#222" stroke-width="0.8"/><rect x="8" y="6.5" width="3.6" height="7" rx="1.6" fill="#fff" stroke="#222" stroke-width="0.8"/><rect x="4.6" y="6" width="1" height="4" fill="#555"/><rect x="9.4" y="8.5" width="1" height="3.5" fill="#555"/></svg>
</div></body></html>
